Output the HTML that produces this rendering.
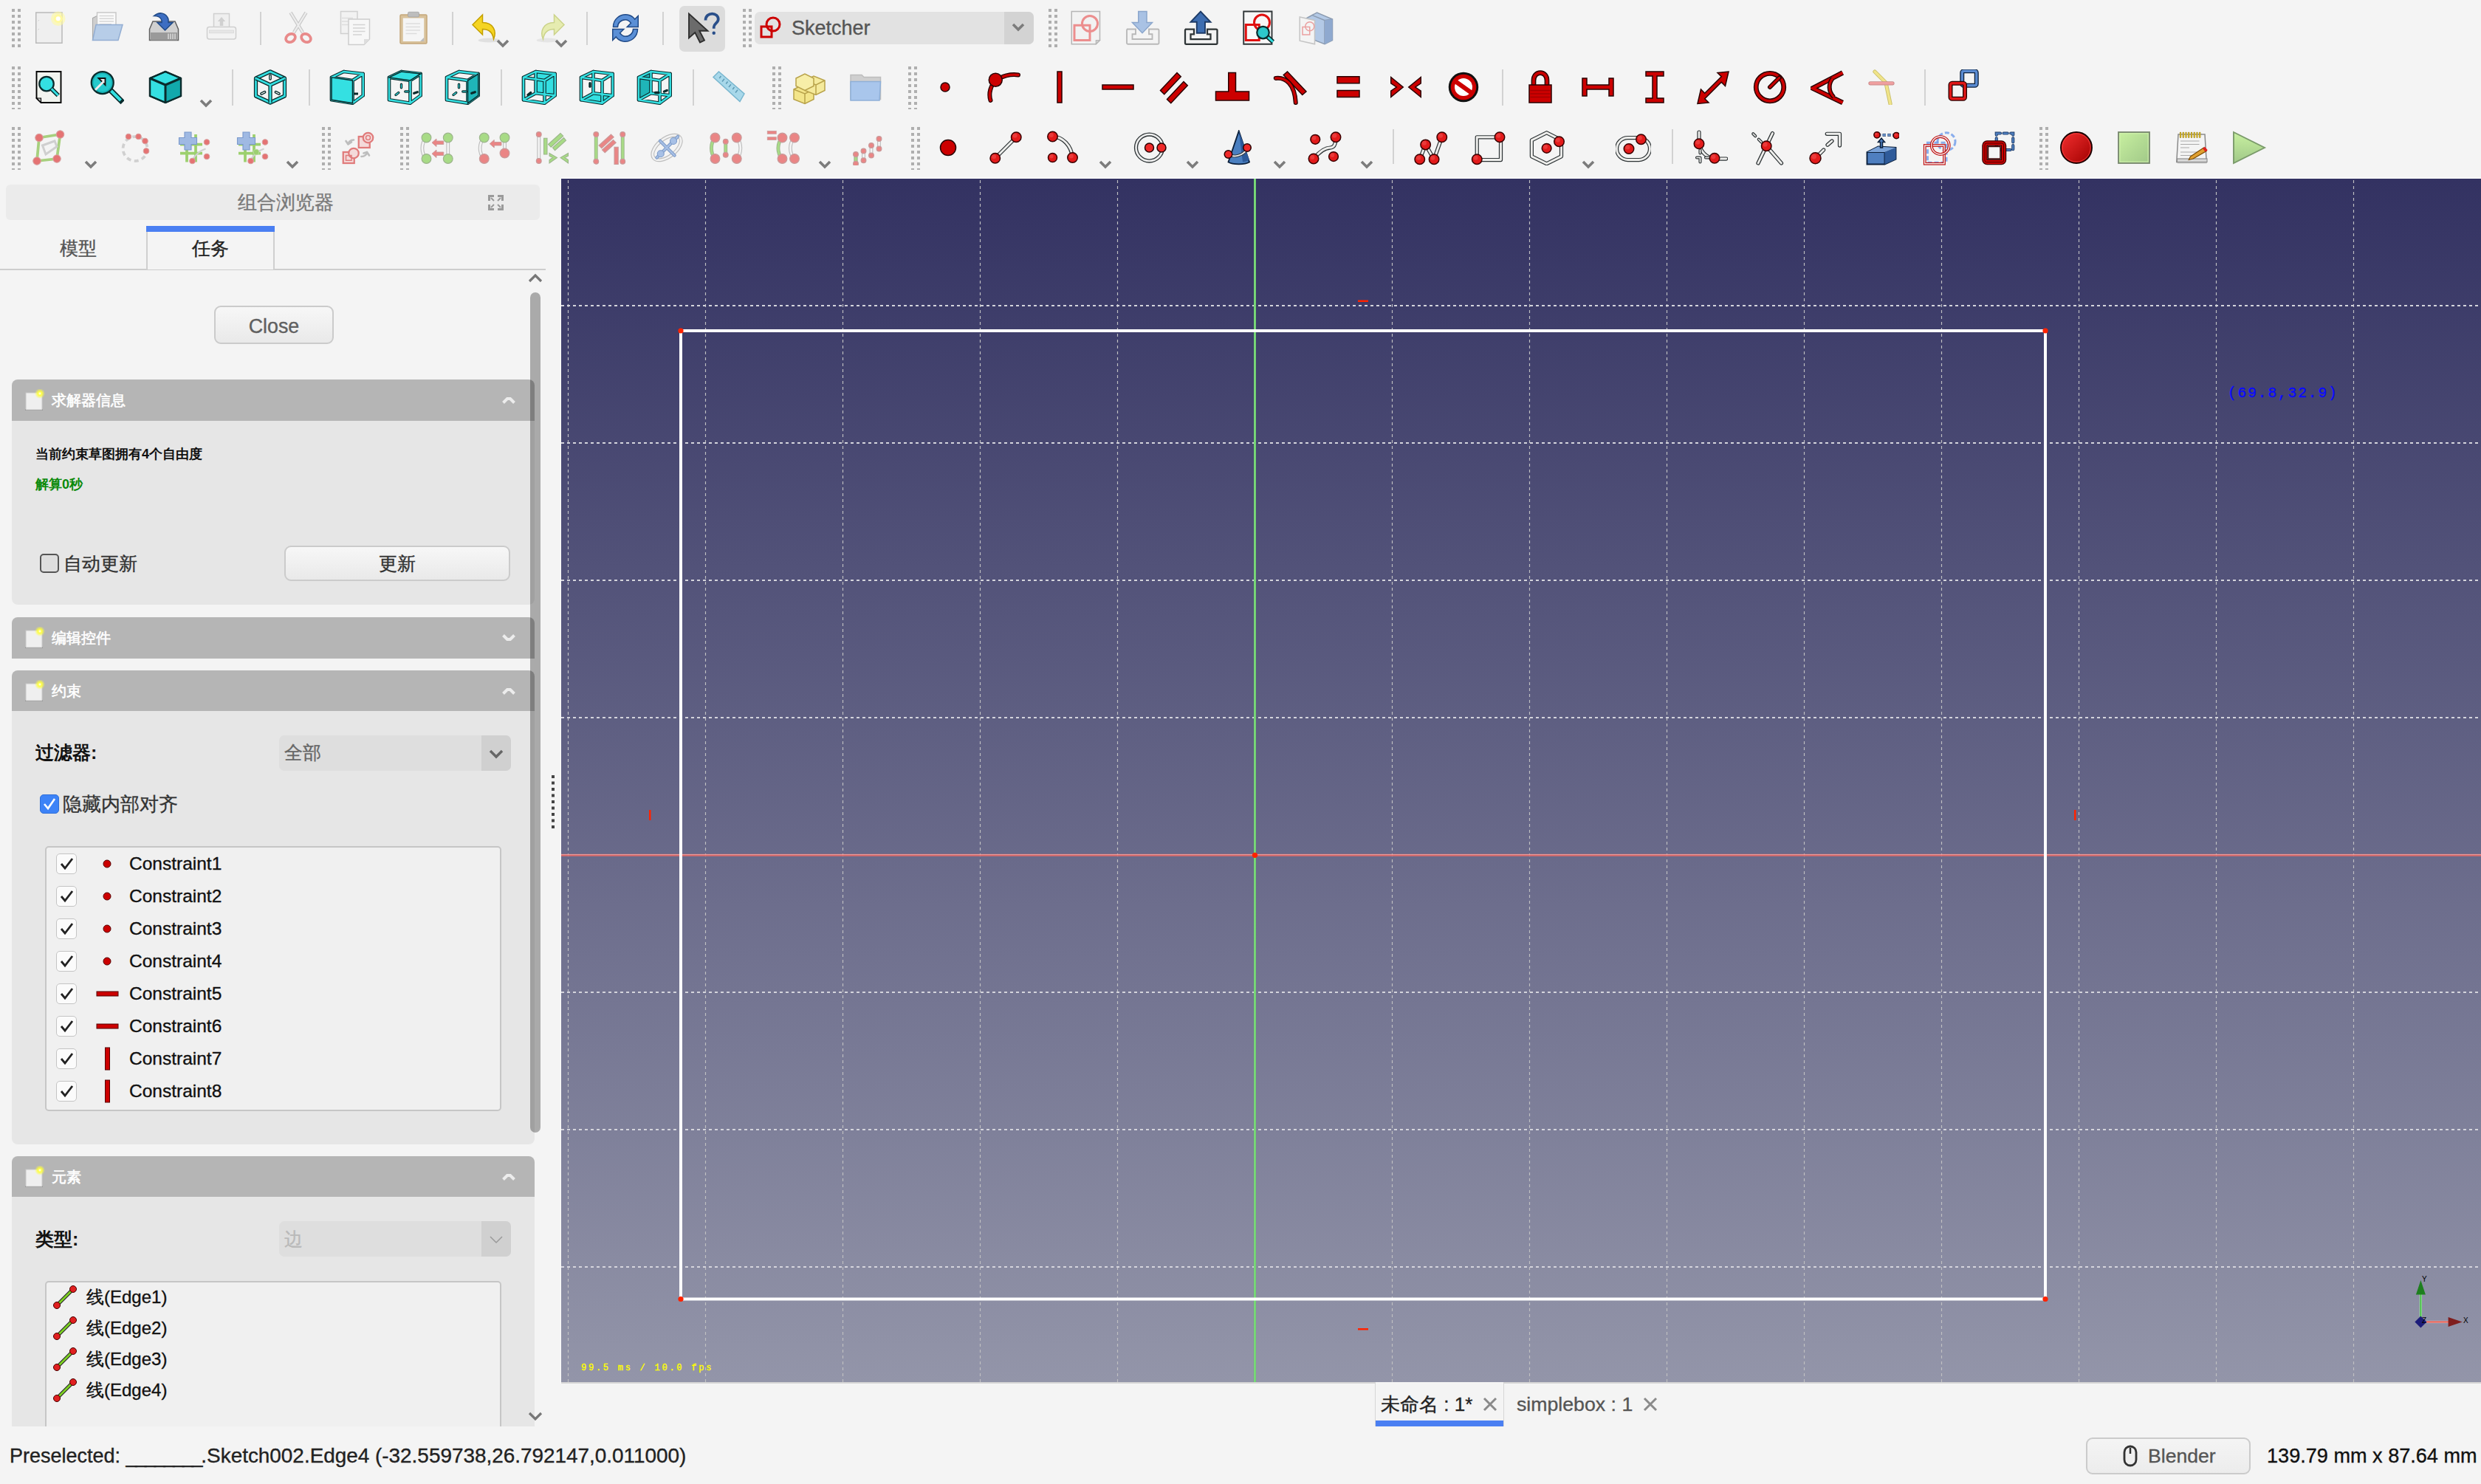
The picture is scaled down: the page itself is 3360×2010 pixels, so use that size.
<!DOCTYPE html>
<html><head><meta charset="utf-8">
<style>
*{margin:0;padding:0;box-sizing:border-box}
html,body{width:3360px;height:2010px;overflow:hidden;background:#f4f4f4;font-family:"Liberation Sans",sans-serif;position:relative}
.a{position:absolute;white-space:nowrap;-webkit-text-stroke:0.35px currentColor}
.btn{position:absolute;border:2px solid #cbcbcb;border-radius:9px;background:linear-gradient(#f7f7f7,#e9e9e9);text-align:center;white-space:nowrap;-webkit-text-stroke:0.35px currentColor}
.cb{position:absolute}
</style></head><body>
<div class="a" style="left:760px;top:241px;width:2600px;height:1px;background:#fff"></div>
<svg class="a" style="left:760px;top:242px" width="2600" height="1630" viewBox="760 242 2600 1630">
<defs><linearGradient id="bg" x1="0" y1="0" x2="0" y2="1"><stop offset="0" stop-color="#333262"/><stop offset="1" stop-color="#9395a9"/></linearGradient></defs>
<rect x="760" y="242" width="2600" height="1630" fill="url(#bg)"/>
<path d="M769.5 242V1872M955.5 242V1872M1141.5 242V1872M1327.5 242V1872M1513.5 242V1872M1885.5 242V1872M2071.5 242V1872M2257.5 242V1872M2443.5 242V1872M2629.5 242V1872M2815.5 242V1872M3001.5 242V1872M3187.5 242V1872" stroke="#c0c0c2" stroke-width="1.15" stroke-dasharray="4 4" stroke-dashoffset="6"/>
<path d="M760 414H3360M760 600H3360M760 786H3360M760 972H3360M760 1344H3360M760 1530H3360M760 1716H3360" stroke="#d4d4dc" stroke-width="1.9" stroke-dasharray="4 4" stroke-dashoffset="0"/>
<path d="M1699.5 242V1872" stroke="#66cc66" stroke-width="3"/><path d="M1699.5 242V1872" stroke="#a8f0a8" stroke-width="1" opacity=".6"/>
<path d="M760 1158.3H3360" stroke="#d86a6a" stroke-width="3"/><path d="M760 1157.5H3360" stroke="#f4b0b0" stroke-width="1" opacity=".7"/>
<path d="M922 448H2770V1759.5H922Z" fill="none" stroke="#ffffff" stroke-width="4"/>
<circle cx="922" cy="448" r="3.6" fill="#ff2200"/>
<circle cx="2770" cy="448" r="3.6" fill="#ff2200"/>
<circle cx="922" cy="1759.5" r="3.6" fill="#ff2200"/>
<circle cx="2770" cy="1759.5" r="3.6" fill="#ff2200"/>
<circle cx="1699.5" cy="1158.3" r="3.6" fill="#ff2200"/>
<rect x="1839" y="406.5" width="14" height="2.5" fill="#ff2200"/>
<rect x="1839" y="1799" width="14" height="2.5" fill="#ff2200"/>
<rect x="879" y="1097" width="2.5" height="14" fill="#ff2200"/>
<rect x="2809" y="1097" width="2.5" height="14" fill="#ff2200"/>
</svg>
<div class="a" style="left:3017px;top:520px;font-family:'Liberation Mono',monospace;font-size:19.5px;line-height:26px;letter-spacing:1.9px;color:#0a0aff">(69.8,32.9)</div>
<div class="a" style="left:787px;top:1845px;font-family:'Liberation Mono',monospace;font-size:12px;line-height:16px;letter-spacing:2.75px;color:#ffff00">99.5 ms / 10.0 fps</div>
<svg class="a" style="left:3250px;top:1720px" width="110" height="90" viewBox="3250 1720 110 90"><path d="M3278.4 1790V1748" stroke="#8ef08e" stroke-width="3"/><path d="M3278.4 1790V1748" stroke="#2c9a2c" stroke-width="1"/><path d="M3278.4 1734L3284.9 1753.5H3271.9Z" fill="#1e7f1e"/><path d="M3286 1790.5H3320" stroke="#f4a0a0" stroke-width="3"/><path d="M3286 1790.5H3320" stroke="#c43" stroke-width="1"/><path d="M3334.6 1790.5L3315.6 1784V1797Z" fill="#7f1e1e"/><path d="M3278.4 1782.5L3286.4 1790.5L3278.4 1798.5L3270.4 1790.5Z" fill="#1c1c7a"/><text x="3280" y="1736" font-family="Liberation Sans" font-size="10" fill="#000">Y</text><text x="3280" y="1792" font-family="Liberation Sans" font-size="10" fill="#000">Z</text><text x="3336" y="1792" font-family="Liberation Sans" font-size="10" fill="#000">X</text></svg>
<div class="a" style="left:760px;top:1872px;width:2600px;height:2px;background:#d6d6d6"></div>
<div class="a" style="left:759px;top:242px;width:1px;height:1632px;background:#fafafa"></div>
<div class="a" style="left:8px;top:250px;width:723px;height:48px;background:#ebebeb;border-radius:6px"></div>
<div class="a" style="left:257px;top:256px;width:260px;text-align:center;font-size:25.6px;line-height:36px;color:#7a7a7a">组合浏览器</div>
<svg class="a" style="left:661px;top:264px" width="21" height="21" viewBox="0 0 21 21" fill="#9a9a9a"><path d="M0 0h8v3H3v5H0zM13 0h8v8h-3V3h-5zM0 13h3v5h5v3H0zM18 13h3v8h-8v-3h5z"/><path d="M4 4l4 4M17 4l-4 4M4 17l4-4M17 17l-4-4" stroke="#9a9a9a" stroke-width="2"/></svg>
<div class="a" style="left:0;top:363.5px;width:739px;height:2px;background:#cdcdcd"></div>
<div class="a" style="left:198px;top:306px;width:174px;height:59px;background:#f4f4f4;border-left:2px solid #cfcfcf;border-right:2px solid #cfcfcf"></div>
<div class="a" style="left:198px;top:306px;width:174px;height:8px;background:#4a7ff2"></div>
<div class="a" style="left:56px;top:318px;width:100px;text-align:center;font-size:25px;line-height:36px;color:#555">模型</div>
<div class="a" style="left:235px;top:318px;width:100px;text-align:center;font-size:25px;line-height:36px;color:#222">任务</div>
<svg class="a" style="left:714px;top:369px" width="22" height="16" viewBox="0 0 22 16"><path d="M3 12l8-8 8 8" fill="none" stroke="#777" stroke-width="3.2"/></svg>
<div class="btn" style="left:290px;top:414px;width:162px;height:52px;font-size:26.8px;line-height:52px;color:#606060">Close</div>
<div class="a" style="left:16px;top:514px;width:708px;height:56px;background:#b5b5b5;border-radius:8px 8px 0 0"></div><svg class="a" style="left:33px;top:527px" width="30" height="32" viewBox="0 0 30 32"><defs><radialGradient id="gl"><stop offset="0" stop-color="#fff"/><stop offset=".35" stop-color="#ffff40"/><stop offset="1" stop-color="#ffff40" stop-opacity="0"/></radialGradient></defs><rect x="1" y="27" width="24" height="2" fill="#777" opacity=".7"/><rect x="2" y="5" width="22" height="23" fill="#efefef" stroke="#c8c8c8" stroke-width="1"/><circle cx="21" cy="6" r="7" fill="url(#gl)"/></svg><div class="a" style="left:70px;top:514px;font-size:20px;line-height:56px;color:#fff;-webkit-text-stroke:0.6px #fff">求解器信息</div><svg class="a" style="left:678px;top:533px" width="22" height="18" viewBox="0 0 22 18"><path d="M3.5 12.5L9 7H13L18.5 12.5" fill="none" stroke="#ececec" stroke-width="4"/></svg>
<div class="a" style="left:16px;top:570px;width:708px;height:249px;background:#e6e6e6;border-radius:0 0 8px 8px"></div>
<div class="a" style="left:48px;top:602px;font-size:18px;line-height:26px;font-weight:bold;color:#111;-webkit-text-stroke:0">当前约束草图拥有4个自由度</div>
<div class="a" style="left:48px;top:643px;font-size:18px;line-height:26px;font-weight:bold;color:#0b8a0b;-webkit-text-stroke:0">解算0秒</div>
<div class="cb" style="left:54px;top:750px;width:26px;height:26px;border:2px solid #555;border-radius:5px;background:#dedede"></div>
<div class="a" style="left:86px;top:745px;font-size:25px;line-height:36px;color:#333">自动更新</div>
<div class="btn" style="left:385px;top:739px;width:306px;height:48px;font-size:25px;line-height:45px;color:#333">更新</div>
<div class="a" style="left:16px;top:836px;width:708px;height:56px;background:#b5b5b5;border-radius:8px 8px 0 0"></div><svg class="a" style="left:33px;top:849px" width="30" height="32" viewBox="0 0 30 32"><defs><radialGradient id="gl"><stop offset="0" stop-color="#fff"/><stop offset=".35" stop-color="#ffff40"/><stop offset="1" stop-color="#ffff40" stop-opacity="0"/></radialGradient></defs><rect x="1" y="27" width="24" height="2" fill="#777" opacity=".7"/><rect x="2" y="5" width="22" height="23" fill="#efefef" stroke="#c8c8c8" stroke-width="1"/><circle cx="21" cy="6" r="7" fill="url(#gl)"/></svg><div class="a" style="left:70px;top:836px;font-size:20px;line-height:56px;color:#fff;-webkit-text-stroke:0.6px #fff">编辑控件</div><svg class="a" style="left:678px;top:855px" width="22" height="18" viewBox="0 0 22 18"><path d="M3.5 5.5L9 11H13L18.5 5.5" fill="none" stroke="#ececec" stroke-width="4"/></svg>
<div class="a" style="left:16px;top:908px;width:708px;height:56px;background:#b5b5b5;border-radius:8px 8px 0 0"></div><svg class="a" style="left:33px;top:921px" width="30" height="32" viewBox="0 0 30 32"><defs><radialGradient id="gl"><stop offset="0" stop-color="#fff"/><stop offset=".35" stop-color="#ffff40"/><stop offset="1" stop-color="#ffff40" stop-opacity="0"/></radialGradient></defs><rect x="1" y="27" width="24" height="2" fill="#777" opacity=".7"/><rect x="2" y="5" width="22" height="23" fill="#efefef" stroke="#c8c8c8" stroke-width="1"/><circle cx="21" cy="6" r="7" fill="url(#gl)"/></svg><div class="a" style="left:70px;top:908px;font-size:20px;line-height:56px;color:#fff;-webkit-text-stroke:0.6px #fff">约束</div><svg class="a" style="left:678px;top:927px" width="22" height="18" viewBox="0 0 22 18"><path d="M3.5 12.5L9 7H13L18.5 12.5" fill="none" stroke="#ececec" stroke-width="4"/></svg>
<div class="a" style="left:16px;top:963px;width:708px;height:587px;background:#e6e6e6;border-radius:0 0 8px 8px"></div>
<div class="a" style="left:48px;top:1001px;font-size:25px;line-height:36px;font-weight:bold;color:#111;-webkit-text-stroke:0">过滤器:</div>
<div class="a" style="left:378px;top:996px;width:314px;height:48px;background:#dedede;border-radius:7px"></div>
<div class="a" style="left:652px;top:996px;width:40px;height:48px;background:#d0d0d0;border-radius:0 7px 7px 0"></div>
<svg class="a" style="left:661px;top:1013px" width="22" height="16" viewBox="0 0 22 16"><path d="M3 4l8 8 8-8" fill="none" stroke="#666" stroke-width="3.5"/></svg>
<div class="a" style="left:385px;top:1001px;font-size:25px;line-height:36px;color:#666">全部</div>
<div class="a" style="left:54px;top:1076px;width:26px;height:26px;border-radius:5px;background:#3d83f7;border:1px solid #2f6fd8"></div>
<svg class="a" style="left:54px;top:1076px" width="26" height="26" viewBox="0 0 26 26"><path d="M6 13l5 6 9-13" fill="none" stroke="#fff" stroke-width="2.6"/></svg>
<div class="a" style="left:85px;top:1071px;font-size:25.7px;line-height:36px;color:#333">隐藏内部对齐</div>
<svg class="a" style="left:747px;top:1050px" width="6" height="72" fill="#444"><rect x="0" y="0.0" width="4" height="4"/><rect x="0" y="8.5" width="4" height="4"/><rect x="0" y="17.0" width="4" height="4"/><rect x="0" y="25.5" width="4" height="4"/><rect x="0" y="34.0" width="4" height="4"/><rect x="0" y="42.5" width="4" height="4"/><rect x="0" y="51.0" width="4" height="4"/><rect x="0" y="59.5" width="4" height="4"/><rect x="0" y="68.0" width="4" height="4"/></svg>
<div class="a" style="left:61px;top:1146px;width:618px;height:359px;background:#f0f0f0;border:2px solid #c6c6c6;border-radius:5px"></div>
<div class="a" style="left:76px;top:1156.0px;width:28px;height:28px;background:#fbfbfb;border:1.5px solid #c4c4c4;border-radius:5px"></div>
<svg class="a" style="left:76px;top:1156.0px" width="28" height="28" viewBox="0 0 28 28"><path d="M7 14l5 6 10-13" fill="none" stroke="#222" stroke-width="2.8"/></svg>
<svg class="a" style="left:137px;top:1162.0px" width="16" height="16" viewBox="0 0 16 16"><circle cx="8" cy="8" r="5" fill="#cc0000" stroke="#500" stroke-width="1"/></svg>
<div class="a" style="left:175px;top:1154.0px;font-size:24.5px;line-height:32px;color:#111">Constraint1</div>
<div class="a" style="left:76px;top:1200.0px;width:28px;height:28px;background:#fbfbfb;border:1.5px solid #c4c4c4;border-radius:5px"></div>
<svg class="a" style="left:76px;top:1200.0px" width="28" height="28" viewBox="0 0 28 28"><path d="M7 14l5 6 10-13" fill="none" stroke="#222" stroke-width="2.8"/></svg>
<svg class="a" style="left:137px;top:1206.0px" width="16" height="16" viewBox="0 0 16 16"><circle cx="8" cy="8" r="5" fill="#cc0000" stroke="#500" stroke-width="1"/></svg>
<div class="a" style="left:175px;top:1198.0px;font-size:24.5px;line-height:32px;color:#111">Constraint2</div>
<div class="a" style="left:76px;top:1243.9px;width:28px;height:28px;background:#fbfbfb;border:1.5px solid #c4c4c4;border-radius:5px"></div>
<svg class="a" style="left:76px;top:1243.9px" width="28" height="28" viewBox="0 0 28 28"><path d="M7 14l5 6 10-13" fill="none" stroke="#222" stroke-width="2.8"/></svg>
<svg class="a" style="left:137px;top:1249.9px" width="16" height="16" viewBox="0 0 16 16"><circle cx="8" cy="8" r="5" fill="#cc0000" stroke="#500" stroke-width="1"/></svg>
<div class="a" style="left:175px;top:1241.9px;font-size:24.5px;line-height:32px;color:#111">Constraint3</div>
<div class="a" style="left:76px;top:1287.8px;width:28px;height:28px;background:#fbfbfb;border:1.5px solid #c4c4c4;border-radius:5px"></div>
<svg class="a" style="left:76px;top:1287.8px" width="28" height="28" viewBox="0 0 28 28"><path d="M7 14l5 6 10-13" fill="none" stroke="#222" stroke-width="2.8"/></svg>
<svg class="a" style="left:137px;top:1293.8px" width="16" height="16" viewBox="0 0 16 16"><circle cx="8" cy="8" r="5" fill="#cc0000" stroke="#500" stroke-width="1"/></svg>
<div class="a" style="left:175px;top:1285.8px;font-size:24.5px;line-height:32px;color:#111">Constraint4</div>
<div class="a" style="left:76px;top:1331.8px;width:28px;height:28px;background:#fbfbfb;border:1.5px solid #c4c4c4;border-radius:5px"></div>
<svg class="a" style="left:76px;top:1331.8px" width="28" height="28" viewBox="0 0 28 28"><path d="M7 14l5 6 10-13" fill="none" stroke="#222" stroke-width="2.8"/></svg>
<svg class="a" style="left:130px;top:1340.8px" width="32" height="10" viewBox="0 0 32 10"><rect x="1" y="2" width="29" height="6" fill="#cc0000" stroke="#500" stroke-width="1"/></svg>
<div class="a" style="left:175px;top:1329.8px;font-size:24.5px;line-height:32px;color:#111">Constraint5</div>
<div class="a" style="left:76px;top:1375.8px;width:28px;height:28px;background:#fbfbfb;border:1.5px solid #c4c4c4;border-radius:5px"></div>
<svg class="a" style="left:76px;top:1375.8px" width="28" height="28" viewBox="0 0 28 28"><path d="M7 14l5 6 10-13" fill="none" stroke="#222" stroke-width="2.8"/></svg>
<svg class="a" style="left:130px;top:1384.8px" width="32" height="10" viewBox="0 0 32 10"><rect x="1" y="2" width="29" height="6" fill="#cc0000" stroke="#500" stroke-width="1"/></svg>
<div class="a" style="left:175px;top:1373.8px;font-size:24.5px;line-height:32px;color:#111">Constraint6</div>
<div class="a" style="left:76px;top:1419.7px;width:28px;height:28px;background:#fbfbfb;border:1.5px solid #c4c4c4;border-radius:5px"></div>
<svg class="a" style="left:76px;top:1419.7px" width="28" height="28" viewBox="0 0 28 28"><path d="M7 14l5 6 10-13" fill="none" stroke="#222" stroke-width="2.8"/></svg>
<svg class="a" style="left:139px;top:1417.7px" width="14" height="32" viewBox="0 0 14 32"><rect x="3.5" y="1" width="6" height="30" fill="#cc0000" stroke="#500" stroke-width="1"/></svg>
<div class="a" style="left:175px;top:1417.7px;font-size:24.5px;line-height:32px;color:#111">Constraint7</div>
<div class="a" style="left:76px;top:1463.7px;width:28px;height:28px;background:#fbfbfb;border:1.5px solid #c4c4c4;border-radius:5px"></div>
<svg class="a" style="left:76px;top:1463.7px" width="28" height="28" viewBox="0 0 28 28"><path d="M7 14l5 6 10-13" fill="none" stroke="#222" stroke-width="2.8"/></svg>
<svg class="a" style="left:139px;top:1461.7px" width="14" height="32" viewBox="0 0 14 32"><rect x="3.5" y="1" width="6" height="30" fill="#cc0000" stroke="#500" stroke-width="1"/></svg>
<div class="a" style="left:175px;top:1461.7px;font-size:24.5px;line-height:32px;color:#111">Constraint8</div>
<div class="a" style="left:16px;top:1566px;width:708px;height:56px;background:#b5b5b5;border-radius:8px 8px 0 0"></div><svg class="a" style="left:33px;top:1579px" width="30" height="32" viewBox="0 0 30 32"><defs><radialGradient id="gl"><stop offset="0" stop-color="#fff"/><stop offset=".35" stop-color="#ffff40"/><stop offset="1" stop-color="#ffff40" stop-opacity="0"/></radialGradient></defs><rect x="1" y="27" width="24" height="2" fill="#777" opacity=".7"/><rect x="2" y="5" width="22" height="23" fill="#efefef" stroke="#c8c8c8" stroke-width="1"/><circle cx="21" cy="6" r="7" fill="url(#gl)"/></svg><div class="a" style="left:70px;top:1566px;font-size:20px;line-height:56px;color:#fff;-webkit-text-stroke:0.6px #fff">元素</div><svg class="a" style="left:678px;top:1585px" width="22" height="18" viewBox="0 0 22 18"><path d="M3.5 12.5L9 7H13L18.5 12.5" fill="none" stroke="#ececec" stroke-width="4"/></svg>
<div class="a" style="left:16px;top:1621px;width:708px;height:311px;background:#e6e6e6"></div>
<div class="a" style="left:48px;top:1660px;font-size:25px;line-height:36px;font-weight:bold;color:#111;-webkit-text-stroke:0">类型:</div>
<div class="a" style="left:378px;top:1654px;width:314px;height:48px;background:#dedede;border-radius:7px"></div>
<div class="a" style="left:652px;top:1654px;width:40px;height:48px;background:#d0d0d0;border-radius:0 7px 7px 0"></div>
<svg class="a" style="left:661px;top:1671px" width="22" height="16" viewBox="0 0 22 16"><path d="M3 4l8 8 8-8" fill="none" stroke="#999" stroke-width="1.5"/></svg>
<div class="a" style="left:385px;top:1660px;font-size:25px;line-height:36px;color:#b9b9b9">边</div>
<div class="a" style="left:61px;top:1735px;width:618px;height:220px;background:#f0f0f0;border:2px solid #c6c6c6;border-radius:5px"></div>
<svg class="a" style="left:70px;top:1739.0px" width="36" height="36" viewBox="0 0 36 36"><path d="M7 29L29 7" stroke="#2e2e2e" stroke-width="5"/><path d="M7 29L29 7" stroke="#7ed321" stroke-width="2.5"/><circle cx="7" cy="29" r="4.5" fill="#e02020" stroke="#400" stroke-width="1"/><circle cx="29" cy="7" r="4.5" fill="#e02020" stroke="#400" stroke-width="1"/></svg>
<div class="a" style="left:117px;top:1741.0px;font-size:24px;line-height:32px;color:#111">线(Edge1)</div>
<svg class="a" style="left:70px;top:1781.1px" width="36" height="36" viewBox="0 0 36 36"><path d="M7 29L29 7" stroke="#2e2e2e" stroke-width="5"/><path d="M7 29L29 7" stroke="#7ed321" stroke-width="2.5"/><circle cx="7" cy="29" r="4.5" fill="#e02020" stroke="#400" stroke-width="1"/><circle cx="29" cy="7" r="4.5" fill="#e02020" stroke="#400" stroke-width="1"/></svg>
<div class="a" style="left:117px;top:1783.1px;font-size:24px;line-height:32px;color:#111">线(Edge2)</div>
<svg class="a" style="left:70px;top:1823.2px" width="36" height="36" viewBox="0 0 36 36"><path d="M7 29L29 7" stroke="#2e2e2e" stroke-width="5"/><path d="M7 29L29 7" stroke="#7ed321" stroke-width="2.5"/><circle cx="7" cy="29" r="4.5" fill="#e02020" stroke="#400" stroke-width="1"/><circle cx="29" cy="7" r="4.5" fill="#e02020" stroke="#400" stroke-width="1"/></svg>
<div class="a" style="left:117px;top:1825.2px;font-size:24px;line-height:32px;color:#111">线(Edge3)</div>
<svg class="a" style="left:70px;top:1865.3px" width="36" height="36" viewBox="0 0 36 36"><path d="M7 29L29 7" stroke="#2e2e2e" stroke-width="5"/><path d="M7 29L29 7" stroke="#7ed321" stroke-width="2.5"/><circle cx="7" cy="29" r="4.5" fill="#e02020" stroke="#400" stroke-width="1"/><circle cx="29" cy="7" r="4.5" fill="#e02020" stroke="#400" stroke-width="1"/></svg>
<div class="a" style="left:117px;top:1867.3px;font-size:24px;line-height:32px;color:#111">线(Edge4)</div>
<div class="a" style="left:0;top:1932px;width:760px;height:78px;background:#f4f4f4"></div>
<div class="a" style="left:718px;top:396px;width:14px;height:1138px;background:rgba(0,0,0,.3);border-radius:7px"></div>
<svg class="a" style="left:714px;top:1910px" width="22" height="16" viewBox="0 0 22 16"><path d="M3 4l8 8 8-8" fill="none" stroke="#777" stroke-width="3.2"/></svg>
<div class="a" style="left:1862px;top:1872px;width:175px;height:60px;background:#f4f4f4;border-left:1.5px solid #d6d6d6;border-right:1.5px solid #d6d6d6"></div>
<div class="a" style="left:1863px;top:1924px;width:173px;height:8px;background:#4a7ff2"></div>
<div class="a" style="left:1870px;top:1884px;font-size:26px;line-height:36px;color:#222">未命名 : 1*</div>
<svg class="a" style="left:2007px;top:1891px" width="22" height="22" viewBox="0 0 22 22"><path d="M3 3l16 16M19 3L3 19" stroke="#8a8a8a" stroke-width="3"/></svg>
<div class="a" style="left:2054px;top:1884px;font-size:26.7px;line-height:36px;color:#555">simplebox : 1</div>
<svg class="a" style="left:2224px;top:1891px" width="22" height="22" viewBox="0 0 22 22"><path d="M3 3l16 16M19 3L3 19" stroke="#8a8a8a" stroke-width="3"/></svg>
<div class="btn" style="left:2825px;top:1947px;width:223px;height:50px;background:linear-gradient(#f4f4f4,#ececec)"></div>
<svg class="a" style="left:2874px;top:1957px" width="22" height="30" viewBox="0 0 22 30"><rect x="3" y="2" width="16" height="26" rx="8" fill="none" stroke="#333" stroke-width="2.8"/><path d="M11 4v8" stroke="#333" stroke-width="2.5"/></svg>
<div class="a" style="left:2909px;top:1954px;font-size:26.6px;line-height:36px;color:#555">Blender</div>
<div class="a" style="left:3070px;top:1954px;font-size:27.1px;line-height:36px;color:#111">139.79 mm x 87.64 mm</div>
<div class="a" style="left:13px;top:1954px;font-size:27px;line-height:36px;color:#222">Preselected: <span style="letter-spacing:-2.3px">________</span><span style="font-size:27.9px">.Sketch002.Edge4 (-32.559738,26.792147,0.011000)</span></div>
<svg class="a" style="left:16px;top:12px" width="12" height="52" fill="#afafaf"><rect x="0" y="0" width="4" height="4"/><rect x="8" y="0" width="4" height="4"/><rect x="0" y="8" width="4" height="4"/><rect x="8" y="8" width="4" height="4"/><rect x="0" y="16" width="4" height="4"/><rect x="8" y="16" width="4" height="4"/><rect x="0" y="24" width="4" height="4"/><rect x="8" y="24" width="4" height="4"/><rect x="0" y="32" width="4" height="4"/><rect x="8" y="32" width="4" height="4"/><rect x="0" y="40" width="4" height="4"/><rect x="8" y="40" width="4" height="4"/><rect x="0" y="48" width="4" height="4"/><rect x="8" y="48" width="4" height="4"/></svg>
<svg class="a" style="left:42.0px;top:14.0px" width="48" height="48" viewBox="0 0 64 64"><rect x="9" y="4" width="47" height="55" fill="#efefef" stroke="#b9b9b9" stroke-width="2"/><path d="M14 18l-1 1M14 34l-1 1" stroke="#999" stroke-width="1"/><circle cx="49" cy="15" r="13" fill="#fffaa0" opacity=".6"/><circle cx="49" cy="15" r="8" fill="#fff9a0"/><circle cx="49" cy="15" r="4" fill="#fff"/></svg>
<svg class="a" style="left:120.5px;top:14.0px" width="48" height="48" viewBox="0 0 64 64"><path d="M6 14l8-4v44H6z" fill="#cfcfcf" stroke="#aaa" stroke-width="1.5"/><path d="M14 4h34v40H14z" fill="#fafafa" stroke="#c8c8c8" stroke-width="2"/><path d="M18 10h26M18 15h26M18 20h26M18 25h22" stroke="#d6d6d6" stroke-width="2"/><path d="M12 26h48l-8 28H6z" fill="#b7cde8" stroke="#93aed3" stroke-width="2"/></svg>
<svg class="a" style="left:198.0px;top:14.0px" width="48" height="48" viewBox="0 0 64 64"><path d="M6 34l6-14h40l6 14v20H6z" fill="#d0d0d0" stroke="#5f5f5f" stroke-width="2"/><rect x="8" y="40" width="48" height="14" fill="#9a9a9a"/><path d="M40 42v10M44 42v10M48 42v10M52 42v10" stroke="#eee" stroke-width="1.5"/><path d="M14 10c10-8 22-6 26 6v6h8L34 36 20 22h8v-4c-2-6-8-8-14-8z" fill="#3d6ec2" stroke="#204a87" stroke-width="2"/></svg>
<svg class="a" style="left:276.0px;top:14.0px" width="48" height="48" viewBox="0 0 64 64"><rect x="18" y="6" width="28" height="26" fill="#efefef" stroke="#cfcfcf" stroke-width="2"/><path d="M32 12l-7 8h4v8h6v-8h4z" fill="#d0d0d0"/><rect x="6" y="30" width="52" height="22" rx="4" fill="#f3f3f3" stroke="#cfcfcf" stroke-width="2"/><rect x="10" y="36" width="44" height="5" fill="#e6e6e6" stroke="#d6d6d6"/></svg>
<div class="a" style="left:352px;top:16px;width:2px;height:45px;background:#d2d2d2"></div>
<svg class="a" style="left:380.0px;top:14.0px" width="48" height="48" viewBox="0 0 64 64"><path d="M18 4l22 36M46 4L24 40" stroke="#c9c9c9" stroke-width="6"/><path d="M18 4l22 36M46 4L24 40" stroke="#ededed" stroke-width="3"/><ellipse cx="18" cy="50" rx="9" ry="7" fill="none" stroke="#e88a8a" stroke-width="5" transform="rotate(-30 18 50)"/><ellipse cx="46" cy="50" rx="9" ry="7" fill="none" stroke="#e88a8a" stroke-width="5" transform="rotate(30 46 50)"/></svg>
<svg class="a" style="left:457.0px;top:14.0px" width="48" height="48" viewBox="0 0 64 64"><path d="M6 2h30v40H6z" fill="#f2f2f2" stroke="#d0d0d0" stroke-width="2"/><path d="M8 14h20M8 20h20M8 26h20" stroke="#ddd" stroke-width="2"/><path d="M20 16h38v36l-10 10H20z" fill="#f7f7f7" stroke="#cdcdcd" stroke-width="2"/><path d="M48 62l10-10H48z" fill="#ddd"/><path d="M28 26h22M28 32h22M28 38h22M28 44h16" stroke="#d4d4d4" stroke-width="2.2"/></svg>
<svg class="a" style="left:536.0px;top:14.0px" width="48" height="48" viewBox="0 0 64 64"><rect x="8" y="8" width="48" height="52" rx="2" fill="#d8c19a" stroke="#c3a77a" stroke-width="2"/><rect x="13" y="14" width="38" height="42" fill="#f5f5f5"/><rect x="22" y="3" width="20" height="9" rx="2" fill="#bdbdbd" stroke="#a0a0a0"/><path d="M18 24h26M18 30h26M18 36h26M18 42h20" stroke="#ddd" stroke-width="2"/><path d="M44 56l7-7v7z" fill="#bbb"/></svg>
<div class="a" style="left:612px;top:16px;width:2px;height:45px;background:#d2d2d2"></div>
<svg class="a" style="left:637.0px;top:14.0px" width="48" height="48" viewBox="0 0 64 64"><ellipse cx="34" cy="54" rx="20" ry="4" fill="#000" opacity=".08"/><path d="M22 8L4 26l18 18V34c10 0 18 4 20 18 6-14 0-30-20-30z" fill="#f5d422" stroke="#c4a000" stroke-width="2"/></svg>
<svg class="a" style="left:672px;top:53px" width="18" height="12" viewBox="0 0 18 12"><path d="M2 2l7 7 7-7" fill="none" stroke="#7c7c7c" stroke-width="3.6"/></svg>
<svg class="a" style="left:719.0px;top:14.0px" width="48" height="48" viewBox="0 0 64 64"><ellipse cx="30" cy="54" rx="20" ry="4" fill="#000" opacity=".06"/><path d="M42 8l18 18-18 18V34c-10 0-18 4-20 18-6-14 0-30 20-30z" fill="#e6ecb0" stroke="#cbd38a" stroke-width="2"/></svg>
<svg class="a" style="left:751px;top:53px" width="18" height="12" viewBox="0 0 18 12"><path d="M2 2l7 7 7-7" fill="none" stroke="#7c7c7c" stroke-width="3.6"/></svg>
<div class="a" style="left:794px;top:16px;width:2px;height:45px;background:#d2d2d2"></div>
<svg class="a" style="left:822.5px;top:14.0px" width="48" height="48" viewBox="0 0 64 64"><path d="M10 30C10 16 22 6 36 8c6 1 10 4 13 8l6-6v20H35l7-7c-3-4-6-6-10-6-8 0-14 6-14 13z" fill="#5a8fd6" stroke="#204a87" stroke-width="2"/><path d="M54 34c0 14-12 24-26 22-6-1-10-4-13-8l-6 6V34h20l-7 7c3 4 6 6 10 6 8 0 14-6 14-13z" fill="#5a8fd6" stroke="#204a87" stroke-width="2"/></svg>
<div class="a" style="left:897px;top:16px;width:2px;height:45px;background:#d2d2d2"></div>
<div class="a" style="left:920px;top:8px;width:62px;height:62px;background:#dcdcdc;border-radius:7px"></div>
<svg class="a" style="left:927.0px;top:14.0px" width="48" height="48" viewBox="0 0 64 64"><path d="M8 6v44l11-10 9 18 8-4-9-17h15z" fill="#6b6b6b" stroke="#2e2e2e" stroke-width="2.5"/><path d="M38 18c0-8 6-12 12-12s11 4 11 10c0 7-8 8-8 14v3" fill="none" stroke="#2a4f8a" stroke-width="5"/><circle cx="53" cy="41" r="3" fill="#2a4f8a"/></svg>
<svg class="a" style="left:1006px;top:12px" width="12" height="52" fill="#afafaf"><rect x="0" y="0" width="4" height="4"/><rect x="8" y="0" width="4" height="4"/><rect x="0" y="8" width="4" height="4"/><rect x="8" y="8" width="4" height="4"/><rect x="0" y="16" width="4" height="4"/><rect x="8" y="16" width="4" height="4"/><rect x="0" y="24" width="4" height="4"/><rect x="8" y="24" width="4" height="4"/><rect x="0" y="32" width="4" height="4"/><rect x="8" y="32" width="4" height="4"/><rect x="0" y="40" width="4" height="4"/><rect x="8" y="40" width="4" height="4"/><rect x="0" y="48" width="4" height="4"/><rect x="8" y="48" width="4" height="4"/></svg>
<div class="a" style="left:1022px;top:16px;width:378px;height:44px;background:#e2e2e2;border-radius:7px"></div>
<div class="a" style="left:1360px;top:16px;width:40px;height:44px;background:#d3d3d3;border-radius:0 7px 7px 0"></div>
<svg class="a" style="left:1370px;top:31px" width="18" height="12" viewBox="0 0 18 12"><path d="M2 2l7 7 7-7" fill="none" stroke="#7c7c7c" stroke-width="3.6"/></svg>
<svg class="a" style="left:1027px;top:20px" width="34" height="36" viewBox="0 0 34 36"><rect x="4" y="16" width="14" height="14" fill="none" stroke="#cc0000" stroke-width="3"/><circle cx="20" cy="13" r="9" fill="none" stroke="#cc0000" stroke-width="3"/></svg>
<div class="a" style="left:1072px;top:17px;font-size:27px;line-height:42px;color:#555">Sketcher</div>
<svg class="a" style="left:1420px;top:12px" width="12" height="52" fill="#afafaf"><rect x="0" y="0" width="4" height="4"/><rect x="8" y="0" width="4" height="4"/><rect x="0" y="8" width="4" height="4"/><rect x="8" y="8" width="4" height="4"/><rect x="0" y="16" width="4" height="4"/><rect x="8" y="16" width="4" height="4"/><rect x="0" y="24" width="4" height="4"/><rect x="8" y="24" width="4" height="4"/><rect x="0" y="32" width="4" height="4"/><rect x="8" y="32" width="4" height="4"/><rect x="0" y="40" width="4" height="4"/><rect x="8" y="40" width="4" height="4"/><rect x="0" y="48" width="4" height="4"/><rect x="8" y="48" width="4" height="4"/></svg>
<svg class="a" style="left:1445.6px;top:14.0px" width="48" height="48" viewBox="0 0 64 64"><path d="M7 2h51v52l-7 7H7z" fill="#f2f2f2" stroke="#b5b5b5" stroke-width="2"/><path d="M51 61v-7h7z" fill="#d0d0d0" stroke="#b5b5b5" stroke-width="1.5"/><rect x="12" y="27" width="28" height="27" fill="none" stroke="#ec8e8e" stroke-width="4"/><circle cx="40" cy="24" r="14" fill="none" stroke="#ec8e8e" stroke-width="4"/></svg>
<svg class="a" style="left:1523.4px;top:14.0px" width="48" height="48" viewBox="0 0 64 64"><path d="M4 34h16v9H14v9h36v-9h-6v-9h16q2 0 2 2v23q0 2-2 2H6q-2 0-2-2V36q0-2 2-2z" fill="#f3f3f3" stroke="#b8b8b8" stroke-width="2.5"/><path d="M25 2h15v20h10L32 41 14 22h11z" fill="#a9c2e4" stroke="#8ba6cc" stroke-width="2"/></svg>
<svg class="a" style="left:1601.5px;top:14.0px" width="48" height="48" viewBox="0 0 64 64"><path d="M4 34h16v9H14v9h36v-9h-6v-9h16q2 0 2 2v23q0 2-2 2H6q-2 0-2-2V36q0-2 2-2z" fill="#f3f3f3" stroke="#2e3436" stroke-width="3"/><path d="M25 41h15V21h10L32 2 14 21h11z" fill="#3d6db0" stroke="#1c3a66" stroke-width="2.5"/></svg>
<svg class="a" style="left:1679.4px;top:14.0px" width="48" height="48" viewBox="0 0 64 64"><path d="M7 2h51v59H7z" fill="#f7f7f7" stroke="#2e3436" stroke-width="2.5"/><rect x="11" y="26" width="24" height="28" fill="none" stroke="#e01010" stroke-width="4"/><circle cx="40" cy="22" r="14" fill="none" stroke="#e01010" stroke-width="4"/><path d="M46 44l14 13" stroke="#0a2b2c" stroke-width="8"/><path d="M46 44l14 13" stroke="#34e0e2" stroke-width="4"/><circle cx="42" cy="40" r="11" fill="#2cc8cb" stroke="#0a2b2c" stroke-width="3"/></svg>
<svg class="a" style="left:1758.0px;top:14.0px" width="48" height="48" viewBox="0 0 64 64"><path d="M12 16l22-12 28 12v38L48 61 12 47z" fill="#b3c9e6" stroke="#8b9bb0" stroke-width="2"/><path d="M26 9l22 9v43M48 18l14-2" fill="none" stroke="#8b9bb0" stroke-width="2"/><path d="M48 18l14-2v38L48 61z" fill="#8fa9cf"/><path d="M3 12l27 6v43L3 55z" fill="#f4f4f4" stroke="#c4c4c4" stroke-width="2"/><rect x="8" y="30" width="13" height="14" fill="none" stroke="#eaa0a0" stroke-width="2"/><circle cx="21" cy="29" r="8" fill="none" stroke="#eaa0a0" stroke-width="2"/></svg>
<svg class="a" style="left:16px;top:90px" width="12" height="58" fill="#afafaf"><rect x="0" y="0" width="4" height="4"/><rect x="8" y="0" width="4" height="4"/><rect x="0" y="8" width="4" height="4"/><rect x="8" y="8" width="4" height="4"/><rect x="0" y="16" width="4" height="4"/><rect x="8" y="16" width="4" height="4"/><rect x="0" y="24" width="4" height="4"/><rect x="8" y="24" width="4" height="4"/><rect x="0" y="32" width="4" height="4"/><rect x="8" y="32" width="4" height="4"/><rect x="0" y="40" width="4" height="4"/><rect x="8" y="40" width="4" height="4"/><rect x="0" y="48" width="4" height="4"/><rect x="8" y="48" width="4" height="4"/><rect x="0" y="56" width="4" height="4"/><rect x="8" y="56" width="4" height="4"/></svg>
<svg class="a" style="left:41.5px;top:94.0px" width="48" height="48" viewBox="0 0 64 64"><path d="M10 4h44v56H18l-8-8z" fill="#f2f4ef" stroke="#000" stroke-width="2.5"/><path d="M10 52l8 8v-8z" fill="#bbb" stroke="#000" stroke-width="1.5"/><circle cx="28" cy="26" r="13" fill="#34e0e2" stroke="#0a2b2c" stroke-width="3"/><path d="M37 35l12 12" stroke="#0a2b2c" stroke-width="8"/><path d="M37 35l12 12" stroke="#34e0e2" stroke-width="4"/></svg>
<svg class="a" style="left:119.6px;top:94.0px" width="48" height="48" viewBox="0 0 64 64"><path d="M38 36l20 20" stroke="#0a2b2c" stroke-width="10" stroke-linecap="square"/><path d="M38 36l20 20" stroke="#34e0e2" stroke-width="5.5"/><circle cx="25" cy="24" r="20" fill="#15b3b6" stroke="#0a2b2c" stroke-width="3"/><circle cx="25" cy="24" r="16" fill="#34e0e2" opacity=".5"/><path d="M12 37l14-14M18 16h12v12z" fill="#eee" stroke="#111" stroke-width="2.5"/><path d="M12 37l15-15" stroke="#eee" stroke-width="4"/></svg>
<svg class="a" style="left:200.4px;top:94.0px" width="48" height="48" viewBox="0 0 64 64"><path d="M4 16L32 4l28 12v32L32 60 4 48z" fill="#34e0e2" stroke="#0a2b2c" stroke-width="3"/><path d="M32 28l28-12v32L32 60z" fill="#12a9ac"/><path d="M4 16L32 4l28 12v32L32 60 4 48z" fill="none" stroke="#0a2b2c" stroke-width="3"/><path d="M4 16l28 12 28-12M32 28v32" fill="none" stroke="#0a2b2c" stroke-width="4"/></svg>
<svg class="a" style="left:270px;top:134px" width="18" height="12" viewBox="0 0 18 12"><path d="M2 2l7 7 7-7" fill="none" stroke="#7c7c7c" stroke-width="3.6"/></svg>
<div class="a" style="left:314px;top:94px;width:2px;height:49px;background:#d2d2d2"></div>
<svg class="a" style="left:341.7px;top:94.0px" width="48" height="48" viewBox="0 0 64 64"><path d="M6 16L32 4l26 12v32L32 60 6 48z" fill="none" stroke="#0a2b2c" stroke-width="7" stroke-linejoin="round"/><path d="M6 16L32 4l26 12v32L32 60 6 48z" fill="none" stroke="#34e0e2" stroke-width="3.6"/><path d="M6 16l26 12 26-12M32 28v32" fill="none" stroke="#0a2b2c" stroke-width="7"/><path d="M6 16l26 12 26-12M32 28v32" fill="none" stroke="#34e0e2" stroke-width="3.6"/><path d="M32 11v6M16 44l6-3M48 44l-6-3" stroke="#0a2b2c" stroke-width="5" stroke-linecap="round"/><path d="M32 11v6M16 44l6-3M48 44l-6-3" stroke="#fff" stroke-width="1.5" stroke-linecap="round"/></svg>
<div class="a" style="left:418px;top:94px;width:2px;height:49px;background:#d2d2d2"></div>
<svg class="a" style="left:445.5px;top:94.0px" width="48" height="48" viewBox="0 0 64 64"><path d="M4 14.5 L42 20 M42 20 L42 61 M42 61 L4 55 M4 55 L4 14.5 M4 14.5 L26 4 M26 4 L61 8 M61 8 L42 20 M61 8 L61 47 M61 47 L42 61" fill="none" stroke="#0a2b2c" stroke-width="6.2" stroke-linejoin="round" stroke-linecap="round"/><path d="M4 14.5 L42 20 M42 20 L42 61 M42 61 L4 55 M4 55 L4 14.5 M4 14.5 L26 4 M26 4 L61 8 M61 8 L42 20 M61 8 L61 47 M61 47 L42 61" fill="none" stroke="#34e0e2" stroke-width="3.2" stroke-linecap="round"/><path d="M4 14.5 L42 20 L42 61 L4 55Z" fill="#34e0e2" stroke="#0a2b2c" stroke-width="2"/><path d="M44 44h8" stroke="#0a2b2c" stroke-width="4"/></svg>
<svg class="a" style="left:523.6px;top:94.0px" width="48" height="48" viewBox="0 0 64 64"><path d="M4 14.5 L42 20 M42 20 L42 61 M42 61 L4 55 M4 55 L4 14.5 M4 14.5 L26 4 M26 4 L61 8 M61 8 L42 20 M61 8 L61 47 M61 47 L42 61" fill="none" stroke="#0a2b2c" stroke-width="6.2" stroke-linejoin="round" stroke-linecap="round"/><path d="M4 14.5 L42 20 M42 20 L42 61 M42 61 L4 55 M4 55 L4 14.5 M4 14.5 L26 4 M26 4 L61 8 M61 8 L42 20 M61 8 L61 47 M61 47 L42 61" fill="none" stroke="#34e0e2" stroke-width="3.2" stroke-linecap="round"/><path d="M4 14.5 L26 4 L61 8 L42 20Z" fill="#34e0e2" stroke="#0a2b2c" stroke-width="2"/><path d="M26 27v6M16 46l5-4M33 40h6M49 43l6-2" stroke="#0a2b2c" stroke-width="4.5" stroke-linecap="round"/><path d="M26 27v6M16 46l5-4M33 40h6" stroke="#34e0e2" stroke-width="1.5" stroke-linecap="round"/></svg>
<svg class="a" style="left:602.0px;top:94.0px" width="48" height="48" viewBox="0 0 64 64"><path d="M4 14.5 L42 20 M42 20 L42 61 M42 61 L4 55 M4 55 L4 14.5 M4 14.5 L26 4 M26 4 L61 8 M61 8 L42 20 M61 8 L61 47 M61 47 L42 61" fill="none" stroke="#0a2b2c" stroke-width="6.2" stroke-linejoin="round" stroke-linecap="round"/><path d="M4 14.5 L42 20 M42 20 L42 61 M42 61 L4 55 M4 55 L4 14.5 M4 14.5 L26 4 M26 4 L61 8 M61 8 L42 20 M61 8 L61 47 M61 47 L42 61" fill="none" stroke="#34e0e2" stroke-width="3.2" stroke-linecap="round"/><path d="M42 20 L61 8 L61 47 L42 61Z" fill="#1fb5b8" stroke="#0a2b2c" stroke-width="2"/><path d="M26 27v6M16 46l5-4M33 40h6M49 43l6-2" stroke="#0a2b2c" stroke-width="4.5" stroke-linecap="round"/><path d="M26 27v6M16 46l5-4M33 40h6" stroke="#34e0e2" stroke-width="1.5" stroke-linecap="round"/></svg>
<div class="a" style="left:678px;top:94px;width:2px;height:49px;background:#d2d2d2"></div>
<svg class="a" style="left:706.0px;top:94.0px" width="48" height="48" viewBox="0 0 64 64"><path d="M26 4 L61 8 L61 47 L26 43Z" fill="#34e0e2" stroke="#0a2b2c" stroke-width="2"/><path d="M4 14.5 L42 20 M42 20 L42 61 M42 61 L4 55 M4 55 L4 14.5 M4 14.5 L26 4 M26 4 L61 8 M61 8 L42 20 M61 8 L61 47 M61 47 L42 61 M26 4 L26 43 M26 43 L4 55 M26 43 L61 47" fill="none" stroke="#0a2b2c" stroke-width="6.2" stroke-linejoin="round" stroke-linecap="round"/><path d="M4 14.5 L42 20 M42 20 L42 61 M42 61 L4 55 M4 55 L4 14.5 M4 14.5 L26 4 M26 4 L61 8 M61 8 L42 20 M61 8 L61 47 M61 47 L42 61 M26 4 L26 43 M26 43 L4 55 M26 43 L61 47" fill="none" stroke="#34e0e2" stroke-width="3.2" stroke-linecap="round"/><path d="M12 46l5-4" stroke="#0a2b2c" stroke-width="4.5" stroke-linecap="round"/></svg>
<svg class="a" style="left:784.0px;top:94.0px" width="48" height="48" viewBox="0 0 64 64"><path d="M4 55 L42 61 L61 47 L26 43Z" fill="#34e0e2" stroke="#0a2b2c" stroke-width="2"/><path d="M4 14.5 L42 20 M42 20 L42 61 M42 61 L4 55 M4 55 L4 14.5 M4 14.5 L26 4 M26 4 L61 8 M61 8 L42 20 M61 8 L61 47 M61 47 L42 61 M26 4 L26 43 M26 43 L4 55 M26 43 L61 47" fill="none" stroke="#0a2b2c" stroke-width="6.2" stroke-linejoin="round" stroke-linecap="round"/><path d="M4 14.5 L42 20 M42 20 L42 61 M42 61 L4 55 M4 55 L4 14.5 M4 14.5 L26 4 M26 4 L61 8 M61 8 L42 20 M61 8 L61 47 M61 47 L42 61 M26 4 L26 43 M26 43 L4 55 M26 43 L61 47" fill="none" stroke="#34e0e2" stroke-width="3.2" stroke-linecap="round"/><path d="M20 25v6" stroke="#0a2b2c" stroke-width="4.5" stroke-linecap="round"/></svg>
<svg class="a" style="left:862.0px;top:94.0px" width="48" height="48" viewBox="0 0 64 64"><path d="M4 14.5 L26 4 L26 43 L4 55Z" fill="#1fb5b8" stroke="#0a2b2c" stroke-width="2"/><path d="M4 14.5 L42 20 M42 20 L42 61 M42 61 L4 55 M4 55 L4 14.5 M4 14.5 L26 4 M26 4 L61 8 M61 8 L42 20 M61 8 L61 47 M61 47 L42 61 M26 4 L26 43 M26 43 L4 55 M26 43 L61 47" fill="none" stroke="#0a2b2c" stroke-width="6.2" stroke-linejoin="round" stroke-linecap="round"/><path d="M4 14.5 L42 20 M42 20 L42 61 M42 61 L4 55 M4 55 L4 14.5 M4 14.5 L26 4 M26 4 L61 8 M61 8 L42 20 M61 8 L61 47 M61 47 L42 61 M26 4 L26 43 M26 43 L4 55 M26 43 L61 47" fill="none" stroke="#34e0e2" stroke-width="3.2" stroke-linecap="round"/><path d="M34 42h6M50 40l5-2" stroke="#0a2b2c" stroke-width="4.5" stroke-linecap="round"/></svg>
<div class="a" style="left:938px;top:94px;width:2px;height:49px;background:#d2d2d2"></div>
<svg class="a" style="left:962.5px;top:94.0px" width="48" height="48" viewBox="0 0 64 64"><path d="M14 4l46 40-8 14L4 14z" fill="#a8d8ea" stroke="#78b6cf" stroke-width="2"/><path d="M18 12l-3 4M24 17l-4 5M30 22l-3 4M36 27l-4 5M42 32l-3 4M48 37l-4 5" stroke="#5e9ab4" stroke-width="2"/></svg>
<svg class="a" style="left:1046px;top:90px" width="12" height="58" fill="#afafaf"><rect x="0" y="0" width="4" height="4"/><rect x="8" y="0" width="4" height="4"/><rect x="0" y="8" width="4" height="4"/><rect x="8" y="8" width="4" height="4"/><rect x="0" y="16" width="4" height="4"/><rect x="8" y="16" width="4" height="4"/><rect x="0" y="24" width="4" height="4"/><rect x="8" y="24" width="4" height="4"/><rect x="0" y="32" width="4" height="4"/><rect x="8" y="32" width="4" height="4"/><rect x="0" y="40" width="4" height="4"/><rect x="8" y="40" width="4" height="4"/><rect x="0" y="48" width="4" height="4"/><rect x="8" y="48" width="4" height="4"/><rect x="0" y="56" width="4" height="4"/><rect x="8" y="56" width="4" height="4"/></svg>
<svg class="a" style="left:1071.5px;top:94.0px" width="48" height="48" viewBox="0 0 64 64"><path d="M4 36l16-8 20 8v18l-16 8L4 54z" fill="#f3e58a" stroke="#b8a24a" stroke-width="2"/><path d="M4 36l20 8 16-8M24 44v18" fill="none" stroke="#b8a24a" stroke-width="2"/><path d="M24 20l16-8 20 8v18l-16 8-20-8z" fill="#f5ea9c" stroke="#b8a24a" stroke-width="2"/><path d="M24 20l20 8 16-8M44 28v18" fill="none" stroke="#b8a24a" stroke-width="2"/><path d="M8 16l16-8 16 8v14l-16 8-16-8z" fill="#f7eea8" stroke="#b8a24a" stroke-width="2"/></svg>
<svg class="a" style="left:1149.0px;top:94.0px" width="48" height="48" viewBox="0 0 64 64"><path d="M4 10h20l4 4h30v40H4z" fill="#cfcfcf" stroke="#bdbdbd" stroke-width="2"/><path d="M4 22h54l-2 34H4z" fill="#a9c6ec" stroke="#8fb0d8" stroke-width="2"/></svg>
<svg class="a" style="left:1230px;top:90px" width="12" height="58" fill="#afafaf"><rect x="0" y="0" width="4" height="4"/><rect x="8" y="0" width="4" height="4"/><rect x="0" y="8" width="4" height="4"/><rect x="8" y="8" width="4" height="4"/><rect x="0" y="16" width="4" height="4"/><rect x="8" y="16" width="4" height="4"/><rect x="0" y="24" width="4" height="4"/><rect x="8" y="24" width="4" height="4"/><rect x="0" y="32" width="4" height="4"/><rect x="8" y="32" width="4" height="4"/><rect x="0" y="40" width="4" height="4"/><rect x="8" y="40" width="4" height="4"/><rect x="0" y="48" width="4" height="4"/><rect x="8" y="48" width="4" height="4"/><rect x="0" y="56" width="4" height="4"/><rect x="8" y="56" width="4" height="4"/></svg>
<svg class="a" style="left:1255.7px;top:94.0px" width="48" height="48" viewBox="0 0 64 64"><circle cx="32" cy="32" r="8" fill="#cc0000" stroke="#280000" stroke-width="2"/></svg>
<svg class="a" style="left:1334.0px;top:94.0px" width="48" height="48" viewBox="0 0 64 64"><path d="M10 56c-4-12 0-28 10-36 10-8 26-12 40-10" fill="none" stroke="#280000" stroke-width="8" stroke-linecap="round"/><path d="M10 56c-4-12 0-28 10-36 10-8 26-12 40-10" fill="none" stroke="#cc0000" stroke-width="4.5" stroke-linecap="round"/><circle cx="19" cy="19" r="12" fill="#cc0000" stroke="#280000" stroke-width="2"/></svg>
<svg class="a" style="left:1411.0px;top:94.0px" width="48" height="48" viewBox="0 0 64 64"><rect x="28" y="4" width="8" height="56" fill="#cc0000" stroke="#280000" stroke-width="2"/></svg>
<svg class="a" style="left:1490.0px;top:94.0px" width="48" height="48" viewBox="0 0 64 64"><rect x="4" y="28" width="56" height="8" fill="#cc0000" stroke="#280000" stroke-width="2"/></svg>
<svg class="a" style="left:1567.0px;top:94.0px" width="48" height="48" viewBox="0 0 64 64"><path d="M4 40L34 8l7 7L11 47zM16 56L46 24l7 7L23 63z" fill="#cc0000" stroke="#280000" stroke-width="2" transform="translate(2 -2)"/></svg>
<svg class="a" style="left:1645.0px;top:94.0px" width="48" height="48" viewBox="0 0 64 64"><path d="M25 6h13v34h24v16H2V40h23z" fill="#cc0000" stroke="#280000" stroke-width="2"/></svg>
<svg class="a" style="left:1723.7px;top:94.0px" width="48" height="48" viewBox="0 0 64 64"><path d="M26 4L60 40l-7 6L19 10z" fill="#cc0000" stroke="#280000" stroke-width="2"/><path d="M5 16c18-2 34 10 36 44" fill="none" stroke="#280000" stroke-width="8" stroke-linecap="round"/><path d="M5 16c18-2 34 10 36 44" fill="none" stroke="#cc0000" stroke-width="4.5" stroke-linecap="round"/></svg>
<svg class="a" style="left:1801.5px;top:94.0px" width="48" height="48" viewBox="0 0 64 64"><rect x="12" y="13" width="40" height="12" fill="#cc0000" stroke="#280000" stroke-width="2"/><rect x="12" y="38" width="40" height="12" fill="#cc0000" stroke="#280000" stroke-width="2"/></svg>
<svg class="a" style="left:1879.7px;top:94.0px" width="48" height="48" viewBox="0 0 64 64"><path d="M5 5l22 18L5 41v-11l10-7L5 16zM59 5L37 23l22 18v-11l-10-7 10-7z" fill="#cc0000" stroke="#280000" stroke-width="2" transform="translate(0 9)"/></svg>
<svg class="a" style="left:1957.5px;top:94.0px" width="48" height="48" viewBox="0 0 64 64"><circle cx="32" cy="32" r="27" fill="#111" /><circle cx="32" cy="32" r="23" fill="#cc0000"/><circle cx="32" cy="32" r="16" fill="#fff"/><path d="M18 22l28 20" stroke="#cc0000" stroke-width="8"/></svg>
<div class="a" style="left:2034px;top:94px;width:2px;height:49px;background:#d2d2d2"></div>
<svg class="a" style="left:2061.8px;top:94.0px" width="48" height="48" viewBox="0 0 64 64"><path d="M20 28v-8c0-8 5-14 12-14s12 6 12 14v8" fill="none" stroke="#280000" stroke-width="9"/><path d="M20 28v-8c0-8 5-14 12-14s12 6 12 14v8" fill="none" stroke="#cc0000" stroke-width="5"/><rect x="12" y="28" width="40" height="32" fill="#cc0000" stroke="#280000" stroke-width="2"/><path d="M14 38h36M14 44h36M14 50h36" stroke="#a40000" stroke-width="2"/></svg>
<svg class="a" style="left:2140.0px;top:94.0px" width="48" height="48" viewBox="0 0 64 64"><path d="M4 16h8v12h40V16h8v32h-8V36H12v12H4z" fill="#cc0000" stroke="#280000" stroke-width="2"/></svg>
<svg class="a" style="left:2217.0px;top:94.0px" width="48" height="48" viewBox="0 0 64 64"><path d="M16 4h32v8H36v40h12v8H16v-8h12V12H16z" fill="#cc0000" stroke="#280000" stroke-width="2"/></svg>
<svg class="a" style="left:2296.0px;top:94.0px" width="48" height="48" viewBox="0 0 64 64"><path d="M60 4L54 30l-7-7L17 53l7 7L4 62l6-26 7 7 30-30-7-7z" fill="#cc0000" stroke="#280000" stroke-width="2"/></svg>
<svg class="a" style="left:2373.0px;top:94.0px" width="48" height="48" viewBox="0 0 64 64"><circle cx="32" cy="32" r="25" fill="none" stroke="#280000" stroke-width="9"/><circle cx="32" cy="32" r="25" fill="none" stroke="#cc0000" stroke-width="5"/><path d="M32 32l17-17" stroke="#280000" stroke-width="8" stroke-linecap="round"/><path d="M32 32l17-17" stroke="#cc0000" stroke-width="4" stroke-linecap="round"/></svg>
<svg class="a" style="left:2452.0px;top:94.0px" width="48" height="48" viewBox="0 0 64 64"><path d="M58 6L4 34l54 26" fill="none" stroke="#280000" stroke-width="9"/><path d="M58 6L4 34l54 26" fill="none" stroke="#cc0000" stroke-width="5"/><path d="M40 16c-8 10-8 24 2 34" fill="none" stroke="#280000" stroke-width="8"/><path d="M40 16c-8 10-8 24 2 34" fill="none" stroke="#cc0000" stroke-width="4"/></svg>
<svg class="a" style="left:2529.6px;top:94.0px" width="48" height="48" viewBox="0 0 64 64"><path d="M12 4l20 20 8 38" fill="none" stroke="#c9bf6a" stroke-width="7" stroke-linecap="round" stroke-linejoin="round"/><path d="M12 4l20 20 8 38" fill="none" stroke="#f0e48a" stroke-width="4.5" stroke-linecap="round" stroke-linejoin="round"/><path d="M4 25h40" stroke="#c98a8a" stroke-width="7" stroke-linecap="round"/><path d="M4 25h40" stroke="#ef9f9f" stroke-width="4.5" stroke-linecap="round"/></svg>
<div class="a" style="left:2606px;top:94px;width:2px;height:49px;background:#d2d2d2"></div>
<svg class="a" style="left:2634.0px;top:94.0px" width="48" height="48" viewBox="0 0 64 64"><rect x="31" y="3" width="26" height="26" rx="3" fill="none" stroke="#0b1f3a" stroke-width="8"/><rect x="31" y="3" width="26" height="26" rx="3" fill="none" stroke="#5a8bd1" stroke-width="4.5"/><rect x="10" y="25" width="26" height="28" rx="3" fill="none" stroke="#280000" stroke-width="8"/><rect x="10" y="25" width="26" height="28" rx="3" fill="none" stroke="#e01818" stroke-width="4.5"/></svg>
<svg class="a" style="left:16px;top:172px" width="12" height="58" fill="#afafaf"><rect x="0" y="0" width="4" height="4"/><rect x="8" y="0" width="4" height="4"/><rect x="0" y="8" width="4" height="4"/><rect x="8" y="8" width="4" height="4"/><rect x="0" y="16" width="4" height="4"/><rect x="8" y="16" width="4" height="4"/><rect x="0" y="24" width="4" height="4"/><rect x="8" y="24" width="4" height="4"/><rect x="0" y="32" width="4" height="4"/><rect x="8" y="32" width="4" height="4"/><rect x="0" y="40" width="4" height="4"/><rect x="8" y="40" width="4" height="4"/><rect x="0" y="48" width="4" height="4"/><rect x="8" y="48" width="4" height="4"/><rect x="0" y="56" width="4" height="4"/><rect x="8" y="56" width="4" height="4"/></svg>
<svg class="a" style="left:43.7px;top:176.4px" width="48" height="48" viewBox="0 0 64 64"><path d="M12 14L50 8 44 52 8 56z" fill="none" stroke="#a7d07e" stroke-width="5"/><path d="M18 28l22-8 4 10-20 14z" fill="none" stroke="#cfcfcf" stroke-width="4"/><circle cx="12" cy="14" r="7" fill="#e57373" stroke="#d9a0a0" stroke-width="1.5"/><circle cx="50" cy="8" r="7" fill="#e57373" stroke="#d9a0a0" stroke-width="1.5"/><circle cx="44" cy="52" r="7" fill="#e57373" stroke="#d9a0a0" stroke-width="1.5"/><circle cx="8" cy="56" r="7" fill="#e57373" stroke="#d9a0a0" stroke-width="1.5"/></svg>
<svg class="a" style="left:114px;top:217px" width="18" height="12" viewBox="0 0 18 12"><path d="M2 2l7 7 7-7" fill="none" stroke="#7c7c7c" stroke-width="3.6"/></svg>
<svg class="a" style="left:158.8px;top:176.4px" width="48" height="48" viewBox="0 0 64 64"><circle cx="32" cy="34" r="22" fill="none" stroke="#d0d0d0" stroke-width="5" stroke-dasharray="8 6"/><circle cx="20" cy="12" r="5" fill="#e57373" stroke="#d9a0a0" stroke-width="1.5"/><circle cx="38" cy="12" r="5" fill="#e57373" stroke="#d9a0a0" stroke-width="1.5"/><circle cx="50" cy="20" r="5" fill="#e57373" stroke="#d9a0a0" stroke-width="1.5"/><circle cx="52" cy="38" r="5" fill="#e57373" stroke="#d9a0a0" stroke-width="1.5"/></svg>
<svg class="a" style="left:237.9px;top:176.4px" width="48" height="48" viewBox="0 0 64 64"><path d="M20 8v50M36 8v50M8 26h40M8 42h40" stroke="#9cd06e" stroke-width="5"/><path d="M16 4h12v10h10v12H28v10H16V26H6V14h10z" fill="#9fb9e3" stroke="#7a99cc" stroke-width="1.5"/><path d="M30 54c6-10 12-16 24-20" fill="none" stroke="#d0d0d0" stroke-width="3"/><circle cx="30" cy="56" r="5" fill="#e57373" stroke="#d9a0a0" stroke-width="1.5"/><circle cx="56" cy="22" r="5" fill="#e57373" stroke="#d9a0a0" stroke-width="1.5"/><circle cx="56" cy="48" r="5" fill="#e57373" stroke="#d9a0a0" stroke-width="1.5"/></svg>
<svg class="a" style="left:316.9px;top:176.4px" width="48" height="48" viewBox="0 0 64 64"><path d="M20 8v50M36 8v50M8 26h40M8 42h40" stroke="#9cd06e" stroke-width="5"/><path d="M16 4h12v10h10v12H28v10H16V26H6V14h10z" fill="#9fb9e3" stroke="#7a99cc" stroke-width="1.5"/><path d="M30 54c6-10 12-16 24-20" fill="none" stroke="#d0d0d0" stroke-width="3"/><circle cx="30" cy="56" r="5" fill="#e57373" stroke="#d9a0a0" stroke-width="1.5"/><circle cx="56" cy="22" r="5" fill="#e57373" stroke="#d9a0a0" stroke-width="1.5"/><circle cx="56" cy="48" r="5" fill="#e57373" stroke="#d9a0a0" stroke-width="1.5"/><circle cx="40" cy="40" r="5" fill="#9ccf70" stroke="#b9d9a0" stroke-width="1.5"/></svg>
<svg class="a" style="left:387px;top:217px" width="18" height="12" viewBox="0 0 18 12"><path d="M2 2l7 7 7-7" fill="none" stroke="#7c7c7c" stroke-width="3.6"/></svg>
<svg class="a" style="left:436px;top:172px" width="12" height="58" fill="#afafaf"><rect x="0" y="0" width="4" height="4"/><rect x="8" y="0" width="4" height="4"/><rect x="0" y="8" width="4" height="4"/><rect x="8" y="8" width="4" height="4"/><rect x="0" y="16" width="4" height="4"/><rect x="8" y="16" width="4" height="4"/><rect x="0" y="24" width="4" height="4"/><rect x="8" y="24" width="4" height="4"/><rect x="0" y="32" width="4" height="4"/><rect x="8" y="32" width="4" height="4"/><rect x="0" y="40" width="4" height="4"/><rect x="8" y="40" width="4" height="4"/><rect x="0" y="48" width="4" height="4"/><rect x="8" y="48" width="4" height="4"/><rect x="0" y="56" width="4" height="4"/><rect x="8" y="56" width="4" height="4"/></svg>
<svg class="a" style="left:461.3px;top:176.4px" width="48" height="48" viewBox="0 0 64 64"><path d="M24 18c-6 0-10 4-10 8M14 26l-4-6M14 26l6-4" fill="none" stroke="#bdbdbd" stroke-width="3.5" stroke-linecap="round"/><path d="M38 48c6 0 10-4 10-8M48 40l-6 2M48 40l4 6" fill="none" stroke="#bdbdbd" stroke-width="3.5" stroke-linecap="round"/><rect x="33" y="12" width="20" height="20" fill="#f4dada" stroke="#e07b7b" stroke-width="3"/><circle cx="50" cy="14" r="9" fill="#f4dada" stroke="#e07b7b" stroke-width="3"/><circle cx="50" cy="14" r="4" fill="none" stroke="#e07b7b" stroke-width="2"/><rect x="5" y="40" width="20" height="20" fill="#f4dada" stroke="#e07b7b" stroke-width="3"/><circle cx="24" cy="42" r="9" fill="#f4dada" stroke="#e07b7b" stroke-width="3"/><rect x="10" y="46" width="10" height="9" fill="none" stroke="#e07b7b" stroke-width="2"/></svg>
<svg class="a" style="left:542px;top:172px" width="12" height="58" fill="#afafaf"><rect x="0" y="0" width="4" height="4"/><rect x="8" y="0" width="4" height="4"/><rect x="0" y="8" width="4" height="4"/><rect x="8" y="8" width="4" height="4"/><rect x="0" y="16" width="4" height="4"/><rect x="8" y="16" width="4" height="4"/><rect x="0" y="24" width="4" height="4"/><rect x="8" y="24" width="4" height="4"/><rect x="0" y="32" width="4" height="4"/><rect x="8" y="32" width="4" height="4"/><rect x="0" y="40" width="4" height="4"/><rect x="8" y="40" width="4" height="4"/><rect x="0" y="48" width="4" height="4"/><rect x="8" y="48" width="4" height="4"/><rect x="0" y="56" width="4" height="4"/><rect x="8" y="56" width="4" height="4"/></svg>
<svg class="a" style="left:567.4px;top:176.4px" width="48" height="48" viewBox="0 0 64 64"><path d="M14 14C4 24 4 42 14 52" fill="none" stroke="#bdbdbd" stroke-width="6.5" stroke-linecap="round"/><path d="M14 14C4 24 4 42 14 52" fill="none" stroke="#f4f4f4" stroke-width="3.5" stroke-linecap="round"/><path d="M53 14V52" fill="none" stroke="#bdbdbd" stroke-width="6.5" stroke-linecap="round"/><path d="M53 14V52" fill="none" stroke="#f4f4f4" stroke-width="3.5" stroke-linecap="round"/><path d="M45 20H32V16L24 23l8 7V26H45z" fill="#ea8585" stroke="#c99a9a" stroke-width="1.2"/><path d="M45 40H32V36L24 43l8 7V46H45z" fill="#ea8585" stroke="#c99a9a" stroke-width="1.2"/><circle cx="14" cy="14" r="8.5" fill="#a8db86" stroke="#9cb58c" stroke-width="1.6"/><circle cx="14" cy="52" r="8.5" fill="#a8db86" stroke="#9cb58c" stroke-width="1.6"/><circle cx="53" cy="14" r="8.5" fill="#a8db86" stroke="#9cb58c" stroke-width="1.6"/><circle cx="53" cy="52" r="8.5" fill="#a8db86" stroke="#9cb58c" stroke-width="1.6"/></svg>
<svg class="a" style="left:646.4px;top:176.4px" width="48" height="48" viewBox="0 0 64 64"><path d="M13 14C3 24 3 42 13 52" fill="none" stroke="#bdbdbd" stroke-width="6.5" stroke-linecap="round"/><path d="M13 14C3 24 3 42 13 52" fill="none" stroke="#f4f4f4" stroke-width="3.5" stroke-linecap="round"/><path d="M50 14V42" fill="none" stroke="#bdbdbd" stroke-width="6.5" stroke-linecap="round"/><path d="M50 14V42" fill="none" stroke="#f4f4f4" stroke-width="3.5" stroke-linecap="round"/><path d="M44 22H31V18L23 25l8 7V28H44z" fill="#ea8585" stroke="#c99a9a" stroke-width="1.2"/><circle cx="13" cy="14" r="8.5" fill="#a8db86" stroke="#9cb58c" stroke-width="1.6"/><circle cx="13" cy="52" r="8.5" fill="#ea8585" stroke="#c99a9a" stroke-width="1.6"/><circle cx="50" cy="14" r="8.5" fill="#a8db86" stroke="#9cb58c" stroke-width="1.6"/><circle cx="50" cy="42" r="8.5" fill="#ea8585" stroke="#c99a9a" stroke-width="1.6"/></svg>
<svg class="a" style="left:723.2px;top:176.4px" width="48" height="48" viewBox="0 0 64 64"><path d="M9 8V56" fill="none" stroke="#bdbdbd" stroke-width="6.5" stroke-linecap="round"/><path d="M9 8V56" fill="none" stroke="#f4f4f4" stroke-width="3.5" stroke-linecap="round"/><rect x="18" y="15" width="6" height="29" fill="#a8db86" stroke="#9cb58c" stroke-width="1.4"/><path d="M30 28L52 8l5 5-22 20zM38 34l20-18 4 5-20 18z" fill="#a8db86" stroke="#9cb58c" stroke-width="1.4" transform="translate(-4 -2)"/><path d="M28 42l14 8-14 10v-6l6-4-6-3zM62 42l-14 8 14 10v-6l-6-4 6-3z" fill="#a8db86" stroke="#9cb58c" stroke-width="1.4"/><circle cx="9" cy="8" r="4.5" fill="#ea8585" stroke="#c99a9a" stroke-width="1.6"/><circle cx="9" cy="56" r="4.5" fill="#ea8585" stroke="#c99a9a" stroke-width="1.6"/></svg>
<svg class="a" style="left:802.2px;top:176.4px" width="48" height="48" viewBox="0 0 64 64"><path d="M7 8V57" fill="none" stroke="#9cb58c" stroke-width="6.5" stroke-linecap="round"/><path d="M7 8V57" fill="none" stroke="#a8db86" stroke-width="4" stroke-linecap="round"/><path d="M55 8V57" fill="none" stroke="#9cb58c" stroke-width="6.5" stroke-linecap="round"/><path d="M55 8V57" fill="none" stroke="#a8db86" stroke-width="4" stroke-linecap="round"/><path d="M12 28L34 8l5 5-22 20zM18 36l20-18 5 5-20 18z" fill="#ea8585" stroke="#c99a9a" stroke-width="1.4"/><rect x="40" y="31" width="7" height="31" fill="#ea8585" stroke="#c99a9a" stroke-width="1.4"/><circle cx="7" cy="8" r="4.5" fill="#ea8585" stroke="#c99a9a" stroke-width="1.6"/><circle cx="7" cy="57" r="4.5" fill="#ea8585" stroke="#c99a9a" stroke-width="1.6"/><circle cx="55" cy="8" r="4.5" fill="#ea8585" stroke="#c99a9a" stroke-width="1.6"/><circle cx="55" cy="57" r="4.5" fill="#ea8585" stroke="#c99a9a" stroke-width="1.6"/></svg>
<svg class="a" style="left:879.0px;top:176.4px" width="48" height="48" viewBox="0 0 64 64"><ellipse cx="32" cy="32" rx="30" ry="16" transform="rotate(-38 32 32)" fill="none" stroke="#bdbdbd" stroke-width="6.5"/><ellipse cx="32" cy="32" rx="30" ry="16" transform="rotate(-38 32 32)" fill="none" stroke="#f2f2f2" stroke-width="3.5"/><path d="M14 50L52 12M20 20l26 26" stroke="#7f9cc9" stroke-width="6" stroke-linecap="round"/><path d="M14 50L52 12M20 20l26 26" stroke="#a7c0e6" stroke-width="3" stroke-linecap="round"/><circle cx="21" cy="43" r="6" fill="#a7c0e6" stroke="#7f9cc9" stroke-width="1.5"/><circle cx="44" cy="20" r="6" fill="#a7c0e6" stroke="#7f9cc9" stroke-width="1.5"/></svg>
<svg class="a" style="left:958.0px;top:176.4px" width="48" height="48" viewBox="0 0 64 64"><path d="M14 14C5 24 5 42 14 52" fill="none" stroke="#9cb58c" stroke-width="6.5" stroke-linecap="round"/><path d="M14 14C5 24 5 42 14 52" fill="none" stroke="#a8db86" stroke-width="4" stroke-linecap="round"/><path d="M53 14C62 24 62 42 53 52" fill="none" stroke="#bdbdbd" stroke-width="6.5" stroke-linecap="round"/><path d="M53 14C62 24 62 42 53 52" fill="none" stroke="#f4f4f4" stroke-width="3.5" stroke-linecap="round"/><path d="M33 22V44" fill="none" stroke="#9cb58c" stroke-width="6.5" stroke-linecap="round"/><path d="M33 22V44" fill="none" stroke="#a8db86" stroke-width="4" stroke-linecap="round"/><circle cx="33" cy="21" r="4.5" fill="#ea8585" stroke="#c99a9a" stroke-width="1.6"/><circle cx="33" cy="45" r="4.5" fill="#ea8585" stroke="#c99a9a" stroke-width="1.6"/><circle cx="14" cy="14" r="8.5" fill="#ea8585" stroke="#c99a9a" stroke-width="1.6"/><circle cx="14" cy="52" r="8.5" fill="#ea8585" stroke="#c99a9a" stroke-width="1.6"/><circle cx="53" cy="14" r="8.5" fill="#ea8585" stroke="#c99a9a" stroke-width="1.6"/><circle cx="53" cy="52" r="8.5" fill="#ea8585" stroke="#c99a9a" stroke-width="1.6"/></svg>
<svg class="a" style="left:1037.0px;top:176.4px" width="48" height="48" viewBox="0 0 64 64"><rect x="3" y="2" width="16" height="5" fill="#ea8585" stroke="#c99a9a" stroke-width="1"/><rect x="3" y="13" width="16" height="5" fill="#ea8585" stroke="#c99a9a" stroke-width="1"/><path d="M30 14C20 24 20 42 30 52" fill="none" stroke="#9cb58c" stroke-width="6.5" stroke-linecap="round"/><path d="M30 14C20 24 20 42 30 52" fill="none" stroke="#a8db86" stroke-width="4" stroke-linecap="round"/><path d="M52 14C42 24 42 42 52 52" fill="none" stroke="#bdbdbd" stroke-width="6.5" stroke-linecap="round"/><path d="M52 14C42 24 42 42 52 52" fill="none" stroke="#f4f4f4" stroke-width="3.5" stroke-linecap="round"/><circle cx="30" cy="14" r="8.5" fill="#ea8585" stroke="#c99a9a" stroke-width="1.6"/><circle cx="30" cy="52" r="8.5" fill="#ea8585" stroke="#c99a9a" stroke-width="1.6"/><circle cx="52" cy="14" r="8.5" fill="#ea8585" stroke="#c99a9a" stroke-width="1.6"/><circle cx="52" cy="52" r="8.5" fill="#ea8585" stroke="#c99a9a" stroke-width="1.6"/></svg>
<svg class="a" style="left:1108px;top:217px" width="18" height="12" viewBox="0 0 18 12"><path d="M2 2l7 7 7-7" fill="none" stroke="#7c7c7c" stroke-width="3.6"/></svg>
<svg class="a" style="left:1153.0px;top:176.4px" width="48" height="48" viewBox="0 0 64 64"><path d="M8 48V60" fill="none" stroke="#bdbdbd" stroke-width="6.5" stroke-linecap="round"/><path d="M8 48V60" fill="none" stroke="#f4f4f4" stroke-width="3.5" stroke-linecap="round"/><path d="M22 40V54" fill="none" stroke="#bdbdbd" stroke-width="6.5" stroke-linecap="round"/><path d="M22 40V54" fill="none" stroke="#f4f4f4" stroke-width="3.5" stroke-linecap="round"/><path d="M36 30V46" fill="none" stroke="#bdbdbd" stroke-width="6.5" stroke-linecap="round"/><path d="M36 30V46" fill="none" stroke="#f4f4f4" stroke-width="3.5" stroke-linecap="round"/><path d="M50 18V34" fill="none" stroke="#bdbdbd" stroke-width="6.5" stroke-linecap="round"/><path d="M50 18V34" fill="none" stroke="#f4f4f4" stroke-width="3.5" stroke-linecap="round"/><path d="M8 46V60" fill="none" stroke="#9cb58c" stroke-width="6.5" stroke-linecap="round"/><path d="M8 46V60" fill="none" stroke="#a8db86" stroke-width="4" stroke-linecap="round"/><circle cx="8" cy="44" r="4.5" fill="#ea8585" stroke="#c99a9a" stroke-width="1.6"/><circle cx="8" cy="61" r="4.5" fill="#ea8585" stroke="#c99a9a" stroke-width="1.6"/><circle cx="22" cy="38" r="4.5" fill="#ea8585" stroke="#c99a9a" stroke-width="1.6"/><circle cx="22" cy="55" r="4.5" fill="#ea8585" stroke="#c99a9a" stroke-width="1.6"/><circle cx="36" cy="28" r="4.5" fill="#ea8585" stroke="#c99a9a" stroke-width="1.6"/><circle cx="36" cy="46" r="4.5" fill="#ea8585" stroke="#c99a9a" stroke-width="1.6"/><circle cx="50" cy="16" r="4.5" fill="#ea8585" stroke="#c99a9a" stroke-width="1.6"/><circle cx="50" cy="34" r="4.5" fill="#ea8585" stroke="#c99a9a" stroke-width="1.6"/></svg>
<svg class="a" style="left:1234px;top:172px" width="12" height="58" fill="#afafaf"><rect x="0" y="0" width="4" height="4"/><rect x="8" y="0" width="4" height="4"/><rect x="0" y="8" width="4" height="4"/><rect x="8" y="8" width="4" height="4"/><rect x="0" y="16" width="4" height="4"/><rect x="8" y="16" width="4" height="4"/><rect x="0" y="24" width="4" height="4"/><rect x="8" y="24" width="4" height="4"/><rect x="0" y="32" width="4" height="4"/><rect x="8" y="32" width="4" height="4"/><rect x="0" y="40" width="4" height="4"/><rect x="8" y="40" width="4" height="4"/><rect x="0" y="48" width="4" height="4"/><rect x="8" y="48" width="4" height="4"/><rect x="0" y="56" width="4" height="4"/><rect x="8" y="56" width="4" height="4"/></svg>
<svg class="a" style="left:1260.0px;top:176.4px" width="48" height="48" viewBox="0 0 64 64"><circle cx="32" cy="32" r="14" fill="#cc0000" stroke="#280000" stroke-width="2"/></svg>
<svg class="a" style="left:1337.5px;top:176.4px" width="48" height="48" viewBox="0 0 64 64"><path d="M13 51L51 13" fill="none" stroke="#2e3436" stroke-width="7" stroke-linecap="round" stroke-linejoin="round"/><path d="M13 51L51 13" fill="none" stroke="#eeeeec" stroke-width="3.8" stroke-linecap="round" stroke-linejoin="round"/><circle cx="13" cy="51" r="9" fill="#e31b1b" stroke="#3a0000" stroke-width="2"/><circle cx="10.75" cy="48.3" r="4.05" fill="#f25a5a" opacity=".5"/><circle cx="51" cy="13" r="9" fill="#e31b1b" stroke="#3a0000" stroke-width="2"/><circle cx="48.75" cy="10.3" r="4.05" fill="#f25a5a" opacity=".5"/></svg>
<svg class="a" style="left:1415.0px;top:176.4px" width="48" height="48" viewBox="0 0 64 64"><path d="M14 12c18 0 34 16 36 38" fill="none" stroke="#2e3436" stroke-width="7" stroke-linecap="round" stroke-linejoin="round"/><path d="M14 12c18 0 34 16 36 38" fill="none" stroke="#eeeeec" stroke-width="3.8" stroke-linecap="round" stroke-linejoin="round"/><circle cx="14" cy="12" r="9" fill="#e31b1b" stroke="#3a0000" stroke-width="2"/><circle cx="11.75" cy="9.3" r="4.05" fill="#f25a5a" opacity=".5"/><circle cx="50" cy="50" r="9" fill="#e31b1b" stroke="#3a0000" stroke-width="2"/><circle cx="47.75" cy="47.3" r="4.05" fill="#f25a5a" opacity=".5"/><circle cx="14" cy="50" r="8" fill="#e31b1b" stroke="#3a0000" stroke-width="2"/><circle cx="12.0" cy="47.6" r="3.6" fill="#f25a5a" opacity=".5"/></svg>
<svg class="a" style="left:1488px;top:217px" width="18" height="12" viewBox="0 0 18 12"><path d="M2 2l7 7 7-7" fill="none" stroke="#7c7c7c" stroke-width="3.6"/></svg>
<svg class="a" style="left:1534.0px;top:176.4px" width="48" height="48" viewBox="0 0 64 64"><circle cx="30" cy="32" r="24" fill="none" stroke="#2e3436" stroke-width="7"/><circle cx="30" cy="32" r="24" fill="none" stroke="#eee" stroke-width="3.5"/><circle cx="30" cy="32" r="8" fill="#ef2929" stroke="#280000" stroke-width="2"/><circle cx="52" cy="32" r="8" fill="#ef2929" stroke="#280000" stroke-width="2"/></svg>
<svg class="a" style="left:1606px;top:217px" width="18" height="12" viewBox="0 0 18 12"><path d="M2 2l7 7 7-7" fill="none" stroke="#7c7c7c" stroke-width="3.6"/></svg>
<svg class="a" style="left:1653.0px;top:176.4px" width="48" height="48" viewBox="0 0 64 64"><path d="M33 2L14 58c8 5 30 5 38 0z" fill="#4a7fc0" stroke="#0b1f3a" stroke-width="2.5"/><path d="M33 2L40 58c6-1 10-2 12-4z" fill="#2d5a9a"/><path d="M14 44c8 6 26 4 34-10" fill="none" stroke="#2e3436" stroke-width="5"/><path d="M14 44c8 6 26 4 34-10" fill="none" stroke="#eee" stroke-width="2.5"/><circle cx="14" cy="44" r="7" fill="#ef2929" stroke="#280000" stroke-width="2"/><circle cx="48" cy="32" r="7" fill="#ef2929" stroke="#280000" stroke-width="2"/></svg>
<svg class="a" style="left:1724px;top:217px" width="18" height="12" viewBox="0 0 18 12"><path d="M2 2l7 7 7-7" fill="none" stroke="#7c7c7c" stroke-width="3.6"/></svg>
<svg class="a" style="left:1770.0px;top:176.4px" width="48" height="48" viewBox="0 0 64 64"><path d="M12 52c10-12 20-20 30-20 8 0 10-8 10-18" fill="none" stroke="#2e3436" stroke-width="7" stroke-linecap="round" stroke-linejoin="round"/><path d="M12 52c10-12 20-20 30-20 8 0 10-8 10-18" fill="none" stroke="#eeeeec" stroke-width="3.8" stroke-linecap="round" stroke-linejoin="round"/><circle cx="12" cy="52" r="9" fill="#e31b1b" stroke="#3a0000" stroke-width="2"/><circle cx="9.75" cy="49.3" r="4.05" fill="#f25a5a" opacity=".5"/><circle cx="52" cy="13" r="9" fill="#e31b1b" stroke="#3a0000" stroke-width="2"/><circle cx="49.75" cy="10.3" r="4.05" fill="#f25a5a" opacity=".5"/><circle cx="15" cy="17" r="8.5" fill="#e31b1b" stroke="#3a0000" stroke-width="2"/><circle cx="12.875" cy="14.45" r="3.825" fill="#f25a5a" opacity=".5"/><circle cx="48" cy="48" r="8.5" fill="#e31b1b" stroke="#3a0000" stroke-width="2"/><circle cx="45.875" cy="45.45" r="3.825" fill="#f25a5a" opacity=".5"/></svg>
<svg class="a" style="left:1842px;top:217px" width="18" height="12" viewBox="0 0 18 12"><path d="M2 2l7 7 7-7" fill="none" stroke="#7c7c7c" stroke-width="3.6"/></svg>
<div class="a" style="left:1886px;top:175px;width:2px;height:47px;background:#d2d2d2"></div>
<svg class="a" style="left:1913.0px;top:176.4px" width="48" height="48" viewBox="0 0 64 64"><path d="M13 53L23.5 26.5 38.8 53 53 13" fill="none" stroke="#2e3436" stroke-width="7" stroke-linecap="round" stroke-linejoin="round"/><path d="M13 53L23.5 26.5 38.8 53 53 13" fill="none" stroke="#eeeeec" stroke-width="3.8" stroke-linecap="round" stroke-linejoin="round"/><circle cx="13" cy="53" r="9" fill="#e31b1b" stroke="#3a0000" stroke-width="2"/><circle cx="10.75" cy="50.3" r="4.05" fill="#f25a5a" opacity=".5"/><circle cx="23.5" cy="26.5" r="9" fill="#e31b1b" stroke="#3a0000" stroke-width="2"/><circle cx="21.25" cy="23.8" r="4.05" fill="#f25a5a" opacity=".5"/><circle cx="38.8" cy="53" r="9" fill="#e31b1b" stroke="#3a0000" stroke-width="2"/><circle cx="36.55" cy="50.3" r="4.05" fill="#f25a5a" opacity=".5"/><circle cx="53" cy="13" r="9" fill="#e31b1b" stroke="#3a0000" stroke-width="2"/><circle cx="50.75" cy="10.3" r="4.05" fill="#f25a5a" opacity=".5"/></svg>
<svg class="a" style="left:1991.8px;top:176.4px" width="48" height="48" viewBox="0 0 64 64"><path d="M11 13H54V54H11Z" fill="none" stroke="#2e3436" stroke-width="7" stroke-linecap="round" stroke-linejoin="round"/><path d="M11 13H54V54H11Z" fill="none" stroke="#eeeeec" stroke-width="3.8" stroke-linecap="round" stroke-linejoin="round"/><circle cx="11" cy="53" r="9" fill="#e31b1b" stroke="#3a0000" stroke-width="2"/><circle cx="8.75" cy="50.3" r="4.05" fill="#f25a5a" opacity=".5"/><circle cx="52" cy="13" r="9" fill="#e31b1b" stroke="#3a0000" stroke-width="2"/><circle cx="49.75" cy="10.3" r="4.05" fill="#f25a5a" opacity=".5"/></svg>
<svg class="a" style="left:2070.6px;top:176.4px" width="48" height="48" viewBox="0 0 64 64"><path d="M31.5 5L58 18.5V47.8L31.5 61 4.5 47.8V18.5Z" fill="none" stroke="#2e3436" stroke-width="7" stroke-linecap="round" stroke-linejoin="round"/><path d="M31.5 5L58 18.5V47.8L31.5 61 4.5 47.8V18.5Z" fill="none" stroke="#eeeeec" stroke-width="3.8" stroke-linecap="round" stroke-linejoin="round"/><circle cx="31.5" cy="33" r="8.5" fill="#e31b1b" stroke="#3a0000" stroke-width="2"/><circle cx="29.375" cy="30.45" r="3.825" fill="#f25a5a" opacity=".5"/><circle cx="54" cy="21" r="9" fill="#e31b1b" stroke="#3a0000" stroke-width="2"/><circle cx="51.75" cy="18.3" r="4.05" fill="#f25a5a" opacity=".5"/></svg>
<svg class="a" style="left:2142px;top:217px" width="18" height="12" viewBox="0 0 18 12"><path d="M2 2l7 7 7-7" fill="none" stroke="#7c7c7c" stroke-width="3.6"/></svg>
<svg class="a" style="left:2188.0px;top:176.4px" width="48" height="48" viewBox="0 0 64 64"><path d="M22 14H42A20 20 0 0 1 42 54H22A20 20 0 0 1 22 14Z" fill="none" stroke="#2e3436" stroke-width="7" stroke-linecap="round" stroke-linejoin="round"/><path d="M22 14H42A20 20 0 0 1 42 54H22A20 20 0 0 1 22 14Z" fill="none" stroke="#eeeeec" stroke-width="3.8" stroke-linecap="round" stroke-linejoin="round"/><circle cx="24" cy="34" r="9" fill="#e31b1b" stroke="#3a0000" stroke-width="2"/><circle cx="21.75" cy="31.3" r="4.05" fill="#f25a5a" opacity=".5"/><circle cx="46" cy="17" r="9" fill="#e31b1b" stroke="#3a0000" stroke-width="2"/><circle cx="43.75" cy="14.3" r="4.05" fill="#f25a5a" opacity=".5"/></svg>
<div class="a" style="left:2264px;top:175px;width:2px;height:47px;background:#d2d2d2"></div>
<svg class="a" style="left:2292.0px;top:176.4px" width="48" height="48" viewBox="0 0 64 64"><path d="M12 4V24" fill="none" stroke="#2e3436" stroke-width="7" stroke-linecap="round" stroke-linejoin="round"/><path d="M12 4V24" fill="none" stroke="#eeeeec" stroke-width="3.8" stroke-linecap="round" stroke-linejoin="round"/><path d="M12 26c4 14 14 24 28 26" fill="none" stroke="#2e3436" stroke-width="7" stroke-linecap="round" stroke-linejoin="round"/><path d="M12 26c4 14 14 24 28 26" fill="none" stroke="#eeeeec" stroke-width="3.8" stroke-linecap="round" stroke-linejoin="round"/><path d="M40 52H61" fill="none" stroke="#2e3436" stroke-width="7" stroke-linecap="round" stroke-linejoin="round"/><path d="M40 52H61" fill="none" stroke="#eeeeec" stroke-width="3.8" stroke-linecap="round" stroke-linejoin="round"/><path d="M14 36v6M24 50h6M8 50h6v8" fill="none" stroke="#2e3436" stroke-width="5.5" stroke-linecap="round" stroke-linejoin="round"/><path d="M14 36v6M24 50h6M8 50h6v8" fill="none" stroke="#eeeeec" stroke-width="2.3" stroke-linecap="round" stroke-linejoin="round"/><circle cx="12" cy="25" r="9" fill="#e31b1b" stroke="#3a0000" stroke-width="2"/><circle cx="9.75" cy="22.3" r="4.05" fill="#f25a5a" opacity=".5"/><circle cx="40" cy="51" r="9" fill="#e31b1b" stroke="#3a0000" stroke-width="2"/><circle cx="37.75" cy="48.3" r="4.05" fill="#f25a5a" opacity=".5"/></svg>
<svg class="a" style="left:2368.7px;top:176.4px" width="48" height="48" viewBox="0 0 64 64"><path d="M42 6L16 60" fill="none" stroke="#2e3436" stroke-width="7" stroke-linecap="round" stroke-linejoin="round"/><path d="M42 6L16 60" fill="none" stroke="#eeeeec" stroke-width="3.8" stroke-linecap="round" stroke-linejoin="round"/><path d="M31 29L58 60" fill="none" stroke="#2e3436" stroke-width="7" stroke-linecap="round" stroke-linejoin="round"/><path d="M31 29L58 60" fill="none" stroke="#eeeeec" stroke-width="3.8" stroke-linecap="round" stroke-linejoin="round"/><path d="M7 7l4 4M17 17l5 5" fill="none" stroke="#2e3436" stroke-width="5.5" stroke-linecap="round" stroke-linejoin="round"/><path d="M7 7l4 4M17 17l5 5" fill="none" stroke="#eeeeec" stroke-width="2.3" stroke-linecap="round" stroke-linejoin="round"/><circle cx="31" cy="29" r="9" fill="#e31b1b" stroke="#3a0000" stroke-width="2"/><circle cx="28.75" cy="26.3" r="4.05" fill="#f25a5a" opacity=".5"/></svg>
<svg class="a" style="left:2447.6px;top:176.4px" width="48" height="48" viewBox="0 0 64 64"><path d="M14 51L29 36" fill="none" stroke="#2e3436" stroke-width="7" stroke-linecap="round" stroke-linejoin="round"/><path d="M14 51L29 36" fill="none" stroke="#eeeeec" stroke-width="3.8" stroke-linecap="round" stroke-linejoin="round"/><path d="M36 27l8-7" fill="none" stroke="#2e3436" stroke-width="7" stroke-linecap="round" stroke-linejoin="round"/><path d="M36 27l8-7" fill="none" stroke="#eeeeec" stroke-width="3.8" stroke-linecap="round" stroke-linejoin="round"/><path d="M35 7H58V28" fill="none" stroke="#2e3436" stroke-width="7" stroke-linecap="round" stroke-linejoin="round"/><path d="M35 7H58V28" fill="none" stroke="#eeeeec" stroke-width="3.8" stroke-linecap="round" stroke-linejoin="round"/><circle cx="14" cy="51" r="10" fill="#e31b1b" stroke="#3a0000" stroke-width="2"/><circle cx="11.5" cy="48.0" r="4.5" fill="#f25a5a" opacity=".5"/></svg>
<svg class="a" style="left:2524.0px;top:176.4px" width="48" height="48" viewBox="0 0 64 64"><path d="M6 40l20-10 32 2v21L38 62H6z" fill="#4f7fc0" stroke="#0b1f3a" stroke-width="2.5"/><path d="M6 40h32l20-8M38 40v22" fill="none" stroke="#0b1f3a" stroke-width="2.5"/><path d="M38 40l20-8v21L38 62z" fill="#2f5b9a"/><path d="M6 40l20-10 32 2-20 8z" fill="#7aa2d8"/><path d="M25 9h34" stroke="#1c3a66" stroke-width="5" stroke-dasharray="6 3"/><path d="M25 9h34" stroke="#7aa2d8" stroke-width="2.5" stroke-dasharray="6 3"/><path d="M30 32V22h-4l6-7 6 7h-4v10z" fill="#4f7fc0" stroke="#0b1f3a" stroke-width="2"/><circle cx="24" cy="9" r="5.5" fill="#e31b1b" stroke="#3a0000" stroke-width="2"/><circle cx="22.625" cy="7.35" r="2.475" fill="#f25a5a" opacity=".5"/><circle cx="59" cy="10" r="5.5" fill="#e31b1b" stroke="#3a0000" stroke-width="2"/><circle cx="57.625" cy="8.35" r="2.475" fill="#f25a5a" opacity=".5"/></svg>
<svg class="a" style="left:2602.9px;top:176.4px" width="48" height="48" viewBox="0 0 64 64"><rect x="10" y="23" width="34" height="36" fill="none" stroke="#5b8fe8" stroke-width="4" stroke-dasharray="8 4" opacity=".7"/><circle cx="44" cy="21" r="16" fill="none" stroke="#5b8fe8" stroke-width="4" stroke-dasharray="8 4" opacity=".7"/><rect x="5" y="28" width="35" height="33" fill="none" stroke="#c01010" stroke-width="5"/><rect x="5" y="28" width="35" height="33" fill="none" stroke="#f6f6f6" stroke-width="1.8"/><circle cx="33" cy="28" r="16" fill="none" stroke="#c01010" stroke-width="5"/><circle cx="33" cy="28" r="16" fill="none" stroke="#f6f6f6" stroke-width="1.8"/></svg>
<svg class="a" style="left:2681.7px;top:176.4px" width="48" height="48" viewBox="0 0 64 64"><rect x="29" y="6" width="30" height="30" fill="none" stroke="#1c3a66" stroke-width="5.5" stroke-dasharray="7 6" stroke-linecap="round"/><rect x="29" y="6" width="30" height="30" fill="none" stroke="#4f7fc0" stroke-width="3" stroke-dasharray="7 6" stroke-linecap="round"/><rect x="8" y="24" width="34" height="34" rx="4" fill="none" stroke="#3a0000" stroke-width="10"/><rect x="8" y="24" width="34" height="34" rx="4" fill="none" stroke="#cc0000" stroke-width="6.5"/><rect x="8" y="24" width="34" height="34" rx="3" fill="none" stroke="#3a0000" stroke-width="1.2" transform="translate(0 0)"/><rect x="14" y="30" width="22" height="22" fill="#f4f4f4" stroke="#3a0000" stroke-width="2"/></svg>
<svg class="a" style="left:2762px;top:172px" width="12" height="58" fill="#afafaf"><rect x="0" y="0" width="4" height="4"/><rect x="8" y="0" width="4" height="4"/><rect x="0" y="8" width="4" height="4"/><rect x="8" y="8" width="4" height="4"/><rect x="0" y="16" width="4" height="4"/><rect x="8" y="16" width="4" height="4"/><rect x="0" y="24" width="4" height="4"/><rect x="8" y="24" width="4" height="4"/><rect x="0" y="32" width="4" height="4"/><rect x="8" y="32" width="4" height="4"/><rect x="0" y="40" width="4" height="4"/><rect x="8" y="40" width="4" height="4"/><rect x="0" y="48" width="4" height="4"/><rect x="8" y="48" width="4" height="4"/><rect x="0" y="56" width="4" height="4"/><rect x="8" y="56" width="4" height="4"/></svg>
<svg class="a" style="left:2788.0px;top:176.4px" width="48" height="48" viewBox="0 0 64 64"><defs><linearGradient id="mrg" x1="0" y1="0" x2="1" y2="1"><stop offset="0" stop-color="#f43030"/><stop offset="1" stop-color="#a00000"/></linearGradient></defs><circle cx="32" cy="32" r="28" fill="url(#mrg)" stroke="#1a0000" stroke-width="2.5"/><circle cx="32" cy="32" r="25.5" fill="none" stroke="#ff4a4a" stroke-width="1.2" opacity=".8"/></svg>
<svg class="a" style="left:2866.0px;top:176.4px" width="48" height="48" viewBox="0 0 64 64"><defs><linearGradient id="msg" x1="0" y1="0" x2="1" y2="1"><stop offset="0" stop-color="#c8f0a0"/><stop offset="1" stop-color="#a0c888"/></linearGradient></defs><rect x="4" y="4" width="56" height="56" fill="url(#msg)" stroke="#7a8a70" stroke-width="2.5"/><rect x="6.5" y="6.5" width="51" height="51" fill="none" stroke="#d4f5b0" stroke-width="1.2"/></svg>
<svg class="a" style="left:2943.6px;top:176.4px" width="48" height="48" viewBox="0 0 64 64"><rect x="6" y="56" width="54" height="5" rx="2" fill="#000" opacity=".12"/><path d="M8 8h48l3 50H5z" fill="#f4f4f4" stroke="#8a8a8a" stroke-width="2"/><rect x="6" y="52" width="54" height="6" fill="#d8d8d8" stroke="#8a8a8a" stroke-width="1.5"/><path d="M12 5v8M17 5v8M22 5v8M27 5v8M32 5v8M37 5v8M42 5v8M47 5v8" stroke="#8f7300" stroke-width="3" stroke-linecap="round"/><path d="M12 5v8M17 5v8M22 5v8M27 5v8M32 5v8M37 5v8M42 5v8M47 5v8" stroke="#f0d040" stroke-width="1.5" stroke-linecap="round"/><path d="M12 20h34M12 26h34M12 32h16M12 40h34M12 46h34" stroke="#aaa" stroke-width="1.5"/><path d="M30 48l24-16 5 6-24 14-8 2z" fill="#e0a030" stroke="#7a4a00" stroke-width="1.5"/><path d="M54 32l5 6" stroke="#e02020" stroke-width="5"/></svg>
<svg class="a" style="left:3022.0px;top:176.4px" width="48" height="48" viewBox="0 0 64 64"><defs><linearGradient id="mpg" x1="0" y1="0" x2="0" y2="1"><stop offset="0" stop-color="#c8f0a0"/><stop offset="1" stop-color="#a0c888"/></linearGradient></defs><path d="M4 4l56 28-56 28z" fill="url(#mpg)" stroke="#7a9a6a" stroke-width="2.5"/></svg>
</body></html>
